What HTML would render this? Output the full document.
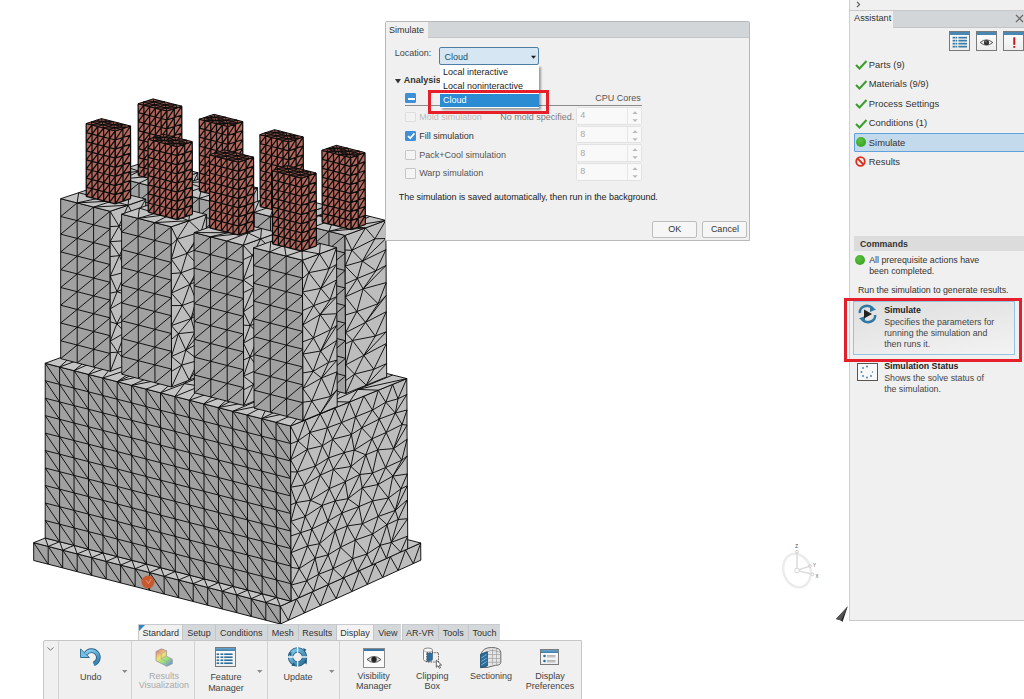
<!DOCTYPE html><html><head><meta charset="utf-8"><style>html,body{margin:0;padding:0;background:#fff;width:1024px;height:699px;overflow:hidden;position:relative;font-family:"Liberation Sans",sans-serif}
#model{position:absolute;left:0;top:0}
.t{position:absolute;font-size:9px;line-height:11px;white-space:nowrap}
.b{font-weight:bold}
#dlg{position:absolute;left:385px;top:21px;width:363.2px;height:218px;background:#f0f0f0;border:1px solid #b8b8b8;border-radius:2px 2px 0 0}
#dlg .tabbar{position:absolute;left:0;top:0;width:363.2px;height:15.2px;background:#d3d6d9;border-bottom:1px solid #c3c6c9}
#dlg .tab{position:absolute;left:0;top:0;width:42px;height:16.2px;background:#f0f0f0;font-size:9px;line-height:17px;color:#333;padding-left:3px;box-sizing:border-box}
#combo{position:absolute;left:53.3px;top:25.2px;width:98px;height:15.8px;background:#d6e6f2;border:1px solid #4f7ea3;border-radius:2px}
.cb{position:absolute;box-sizing:border-box;width:10.5px;height:10.3px;border:1px solid #c6c6c6;background:#f4f4f4;border-radius:1px}
.cb.on{background:#3d8fd6;border-color:#3d8fd6}
.cb.dis{border-color:#dedede;background:#f2f2f2}
.spin{position:absolute;left:190.3px;width:63.8px;height:15.8px;background:#f9f9f9;border:1px solid #e2e2e2;border-radius:1.5px}
.spin span{position:absolute;left:3px;top:2.4px;font-size:9px;line-height:11px;color:#a8a8a8}
.spin:after{content:"";position:absolute;left:50.2px;top:0;width:1px;height:15.8px;background:#e6e6e6}
.btn{position:absolute;top:198.6px;width:43px;height:15.5px;border:1px solid #bdbdbd;background:#f6f6f6;border-radius:2px;font-size:9px;line-height:15px;text-align:center;color:#333}
#dlist{position:absolute;left:439.7px;top:64.7px;width:99.5px;height:43.3px;background:#fff;box-shadow:1.5px 1.5px 2px rgba(0,0,0,0.35)}
#dsel{position:absolute;left:0.3px;top:29.2px;width:99.2px;height:13.5px;background:#2b8bd3}
.redbox{position:absolute;box-sizing:border-box;border:3.9px solid #e5202b}
#panel{position:absolute;left:849px;top:0;width:175px;height:621px;background:#f0f0f0;border-left:1px solid #cfcfcf;border-bottom:1px solid #c8c8c8;box-sizing:border-box}
.aic{position:absolute;top:31.1px;width:19px;height:17.7px;border:1px solid #7a7a7a;background:linear-gradient(#fff,#ececec)}
.aic:before{content:"";position:absolute;left:0;top:0;width:19px;height:2.6px;background:#4a88b2}
.chk{position:absolute;left:4.5px;width:13px;height:10px}
.pt{left:18.8px;font-size:9.4px;color:#333}
#rtabs{position:absolute;left:0;top:623.8px;width:1024px;height:17px}
.rt{position:absolute;top:0;height:17px;background:#d5d8db;border-left:1px solid #c3c6c9;box-sizing:border-box;font-size:9px;line-height:17px;text-align:center;color:#333;border-top:1px solid #c8cbce}
.rt.act{background:#f0f0f0;border-left:1px solid #c8c8c8}
.rt.act2{background:#f3f3f3}
#rbody{position:absolute;left:43px;top:639.5px;width:538.7px;height:70px;background:#f0f0f0;border:1px solid #c6c6c6;border-radius:2px 0 0 0;box-sizing:border-box}
.rsep{position:absolute;top:-1px;width:1px;height:62px;background:#d2d2d2}
.rl{position:absolute;font-size:9px;line-height:11px;white-space:nowrap;transform:translateX(-50%);color:#444}
.rl.g{color:#a9a9a9}
.rarr{position:absolute;top:28px;width:6px;height:4px}
</style></head><body><svg id="model" width="1024" height="699" viewBox="0 0 1024 699"><path d="M33.7 542.7L280.3 606.2L280.4 624.0L33.7 560.5Z" fill="#a1a1a1"/><path d="M33.7 542.7 L33.7 560.5M48.2 546.4 L48.2 564.2M62.7 550.2 L62.7 567.9M77.2 553.9 L77.2 571.7M91.7 557.6 L91.7 575.4M106.2 561.4 L106.2 579.1M120.6 565.1 L120.7 582.9M135.1 568.8 L135.2 586.6M149.6 572.5 L149.7 590.3M164.1 576.3 L164.2 594.1M178.6 580.0 L178.7 597.8M193.2 583.7 L193.2 601.5M207.7 587.5 L207.7 605.3M222.2 591.2 L222.2 609.0M236.7 594.9 L236.8 612.7M251.2 598.7 L251.3 616.5M265.8 602.4 L265.8 620.2M280.3 606.2 L280.4 624.0M33.7 542.7 L48.2 546.4 L62.7 550.2 L77.2 553.9 L91.7 557.6 L106.2 561.4 L120.6 565.1 L135.1 568.8 L149.6 572.5 L164.1 576.3 L178.6 580.0 L193.2 583.7 L207.7 587.5 L222.2 591.2 L236.7 594.9 L251.2 598.7 L265.8 602.4 L280.3 606.2M33.7 560.5 L48.2 564.2 L62.7 567.9 L77.2 571.7 L91.7 575.4 L106.2 579.1 L120.7 582.9 L135.2 586.6 L149.7 590.3 L164.2 594.1 L178.7 597.8 L193.2 601.5 L207.7 605.3 L222.2 609.0 L236.8 612.7 L251.3 616.5 L265.8 620.2 L280.4 624.0M33.7 542.7L48.2 564.2M48.2 546.4L62.7 567.9M62.7 550.2L77.2 571.7M77.2 553.9L91.7 575.4M91.7 557.6L106.2 579.1M106.2 561.4L120.7 582.9M120.6 565.1L135.2 586.6M135.1 568.8L149.7 590.3M149.6 572.5L164.2 594.1M164.1 576.3L178.7 597.8M178.6 580.0L193.2 601.5M193.2 583.7L207.7 605.3M207.7 587.5L222.2 609.0M222.2 591.2L236.8 612.7M236.7 594.9L251.3 616.5M251.2 598.7L265.8 620.2M265.8 602.4L280.4 624.0" fill="none" stroke="#0c0c0c" stroke-width="0.95" stroke-linejoin="round"/><path d="M280.3 606.2L420.7 543.0L420.8 560.2L280.4 624.0Z" fill="#bdbdbd"/><path d="M280.3 606.2 L296.4 598.9 L312.3 591.8 L328.2 584.6 L343.9 577.6 L359.5 570.6 L375.0 563.6 L390.3 556.7 L405.6 549.8 L420.7 543.0M280.4 624.0 L288.4 620.3 L304.4 613.0 L320.3 605.8 L336.1 598.7 L351.8 591.6 L367.3 584.5 L382.7 577.5 L398.1 570.5 L413.3 563.6 L420.8 560.2M280.3 606.2L280.4 624.0M280.3 606.2L288.4 620.3M296.4 598.9L288.4 620.3M296.4 598.9L304.4 613.0M312.3 591.8L304.4 613.0M312.3 591.8L320.3 605.8M328.2 584.6L320.3 605.8M328.2 584.6L336.1 598.7M343.9 577.6L336.1 598.7M343.9 577.6L351.8 591.6M359.5 570.6L351.8 591.6M359.5 570.6L367.3 584.5M375.0 563.6L367.3 584.5M375.0 563.6L382.7 577.5M390.3 556.7L382.7 577.5M390.3 556.7L398.1 570.5M405.6 549.8L398.1 570.5M405.6 549.8L413.3 563.6M420.7 543.0L413.3 563.6M420.7 543.0L420.8 560.2" fill="none" stroke="#0c0c0c" stroke-width="0.95" stroke-linejoin="round"/><path d="M33.7 542.7L280.3 606.2L291.2 601.3L45.2 538.0Z" fill="#c4c4c4"/><path d="M33.7 542.7 L45.2 538.0M48.2 546.4 L59.7 541.7M62.7 550.2 L74.1 545.4M77.2 553.9 L88.5 549.2M91.7 557.6 L103.0 552.9M106.2 561.4 L117.4 556.6M120.6 565.1 L131.9 560.3M135.1 568.8 L146.4 564.0M149.6 572.5 L160.8 567.7M164.1 576.3 L175.3 571.5M178.6 580.0 L189.8 575.2M193.2 583.7 L204.2 578.9M207.7 587.5 L218.7 582.6M222.2 591.2 L233.2 586.4M236.7 594.9 L247.7 590.1M251.2 598.7 L262.2 593.8M265.8 602.4 L276.7 597.5M280.3 606.2 L291.2 601.3M33.7 542.7 L48.2 546.4 L62.7 550.2 L77.2 553.9 L91.7 557.6 L106.2 561.4 L120.6 565.1 L135.1 568.8 L149.6 572.5 L164.1 576.3 L178.6 580.0 L193.2 583.7 L207.7 587.5 L222.2 591.2 L236.7 594.9 L251.2 598.7 L265.8 602.4 L280.3 606.2M45.2 538.0 L59.7 541.7 L74.1 545.4 L88.5 549.2 L103.0 552.9 L117.4 556.6 L131.9 560.3 L146.4 564.0 L160.8 567.7 L175.3 571.5 L189.8 575.2 L204.2 578.9 L218.7 582.6 L233.2 586.4 L247.7 590.1 L262.2 593.8 L276.7 597.5 L291.2 601.3M45.2 538.0L48.2 546.4M59.7 541.7L62.7 550.2M74.1 545.4L77.2 553.9M88.5 549.2L91.7 557.6M103.0 552.9L106.2 561.4M117.4 556.6L120.6 565.1M131.9 560.3L135.1 568.8M146.4 564.0L149.6 572.5M160.8 567.7L164.1 576.3M175.3 571.5L178.6 580.0M189.8 575.2L193.2 583.7M204.2 578.9L207.7 587.5M218.7 582.6L222.2 591.2M233.2 586.4L236.7 594.9M247.7 590.1L251.2 598.7M262.2 593.8L265.8 602.4M276.7 597.5L280.3 606.2" fill="none" stroke="#0c0c0c" stroke-width="0.95" stroke-linejoin="round"/><path d="M335.8 530.4L407.7 548.9L420.7 543.0L349.0 524.6Z" fill="#c4c4c4"/><path d="M335.8 530.4 L349.0 524.6M350.2 534.1 L363.4 528.3M364.6 537.8 L377.7 532.0M379.0 541.5 L392.0 535.7M393.3 545.2 L406.4 539.3M407.7 548.9 L420.7 543.0M335.8 530.4 L350.2 534.1 L364.6 537.8 L379.0 541.5 L393.3 545.2 L407.7 548.9M349.0 524.6 L363.4 528.3 L377.7 532.0 L392.0 535.7 L406.4 539.3 L420.7 543.0M349.0 524.6L350.2 534.1M363.4 528.3L364.6 537.8M377.7 532.0L379.0 541.5M392.0 535.7L393.3 545.2M406.4 539.3L407.7 548.9" fill="none" stroke="#0c0c0c" stroke-width="0.95" stroke-linejoin="round"/><path d="M45.2 363.3L290.5 426.0L291.2 601.3L45.2 538.0Z" fill="#a1a1a1"/><path d="M45.2 363.3 L45.2 380.7 L45.2 398.2 L45.2 415.6 L45.2 433.1 L45.2 450.5 L45.2 468.0 L45.2 485.5 L45.2 503.0 L45.2 520.5 L45.2 538.0M59.6 367.0 L59.6 384.4 L59.6 401.9 L59.6 419.3 L59.6 436.8 L59.6 454.2 L59.6 471.7 L59.6 489.2 L59.6 506.7 L59.6 524.2 L59.7 541.7M74.0 370.7 L74.0 388.1 L74.0 405.6 L74.0 423.0 L74.0 440.5 L74.0 457.9 L74.0 475.4 L74.1 492.9 L74.1 510.4 L74.1 527.9 L74.1 545.4M88.4 374.4 L88.4 391.8 L88.4 409.2 L88.4 426.7 L88.5 444.2 L88.5 461.6 L88.5 479.1 L88.5 496.6 L88.5 514.1 L88.5 531.6 L88.5 549.2M102.8 378.0 L102.8 395.5 L102.8 412.9 L102.9 430.4 L102.9 447.9 L102.9 465.3 L102.9 482.8 L102.9 500.3 L103.0 517.8 L103.0 535.3 L103.0 552.9M117.2 381.7 L117.2 399.2 L117.3 416.6 L117.3 434.1 L117.3 451.6 L117.3 469.0 L117.4 486.5 L117.4 504.0 L117.4 521.5 L117.4 539.1 L117.4 556.6M131.6 385.4 L131.7 402.9 L131.7 420.3 L131.7 437.8 L131.7 455.3 L131.8 472.8 L131.8 490.2 L131.8 507.7 L131.8 525.3 L131.9 542.8 L131.9 560.3M146.1 389.1 L146.1 406.6 L146.1 424.0 L146.2 441.5 L146.2 459.0 L146.2 476.5 L146.2 494.0 L146.3 511.5 L146.3 529.0 L146.3 546.5 L146.4 564.0M160.5 392.8 L160.5 410.3 L160.6 427.7 L160.6 445.2 L160.6 462.7 L160.7 480.2 L160.7 497.7 L160.7 515.2 L160.8 532.7 L160.8 550.2 L160.8 567.7M174.9 396.5 L175.0 413.9 L175.0 431.4 L175.0 448.9 L175.1 466.4 L175.1 483.9 L175.1 501.4 L175.2 518.9 L175.2 536.4 L175.3 553.9 L175.3 571.5M189.4 400.2 L189.4 417.6 L189.4 435.1 L189.5 452.6 L189.5 470.1 L189.6 487.6 L189.6 505.1 L189.6 522.6 L189.7 540.1 L189.7 557.7 L189.8 575.2M203.8 403.9 L203.8 421.3 L203.9 438.8 L203.9 456.3 L204.0 473.8 L204.0 491.3 L204.1 508.8 L204.1 526.3 L204.1 543.8 L204.2 561.4 L204.2 578.9M218.2 407.6 L218.3 425.0 L218.3 442.5 L218.4 460.0 L218.4 477.5 L218.5 495.0 L218.5 512.5 L218.6 530.0 L218.6 547.6 L218.7 565.1 L218.7 582.6M232.7 411.3 L232.7 428.7 L232.8 446.2 L232.8 463.7 L232.9 481.2 L232.9 498.7 L233.0 516.2 L233.0 533.7 L233.1 551.3 L233.1 568.8 L233.2 586.4M247.1 415.0 L247.2 432.4 L247.2 449.9 L247.3 467.4 L247.3 484.9 L247.4 502.4 L247.5 519.9 L247.5 537.5 L247.6 555.0 L247.6 572.5 L247.7 590.1M261.6 418.6 L261.6 436.1 L261.7 453.6 L261.7 471.1 L261.8 488.6 L261.9 506.1 L261.9 523.6 L262.0 541.2 L262.0 558.7 L262.1 576.3 L262.2 593.8M276.0 422.3 L276.1 439.8 L276.2 457.3 L276.2 474.8 L276.3 492.3 L276.3 509.8 L276.4 527.4 L276.5 544.9 L276.5 562.4 L276.6 580.0 L276.7 597.5M290.5 426.0 L290.5 443.5 L290.6 461.0 L290.7 478.5 L290.8 496.0 L290.8 513.5 L290.9 531.1 L291.0 548.6 L291.0 566.2 L291.1 583.7 L291.2 601.3M45.2 363.3 L59.6 367.0 L74.0 370.7 L88.4 374.4 L102.8 378.0 L117.2 381.7 L131.6 385.4 L146.1 389.1 L160.5 392.8 L174.9 396.5 L189.4 400.2 L203.8 403.9 L218.2 407.6 L232.7 411.3 L247.1 415.0 L261.6 418.6 L276.0 422.3 L290.5 426.0M45.2 380.7 L59.6 384.4 L74.0 388.1 L88.4 391.8 L102.8 395.5 L117.2 399.2 L131.7 402.9 L146.1 406.6 L160.5 410.3 L175.0 413.9 L189.4 417.6 L203.8 421.3 L218.3 425.0 L232.7 428.7 L247.2 432.4 L261.6 436.1 L276.1 439.8 L290.5 443.5M45.2 398.2 L59.6 401.9 L74.0 405.6 L88.4 409.2 L102.8 412.9 L117.3 416.6 L131.7 420.3 L146.1 424.0 L160.6 427.7 L175.0 431.4 L189.4 435.1 L203.9 438.8 L218.3 442.5 L232.8 446.2 L247.2 449.9 L261.7 453.6 L276.2 457.3 L290.6 461.0M45.2 415.6 L59.6 419.3 L74.0 423.0 L88.4 426.7 L102.9 430.4 L117.3 434.1 L131.7 437.8 L146.2 441.5 L160.6 445.2 L175.0 448.9 L189.5 452.6 L203.9 456.3 L218.4 460.0 L232.8 463.7 L247.3 467.4 L261.7 471.1 L276.2 474.8 L290.7 478.5M45.2 433.1 L59.6 436.8 L74.0 440.5 L88.5 444.2 L102.9 447.9 L117.3 451.6 L131.7 455.3 L146.2 459.0 L160.6 462.7 L175.1 466.4 L189.5 470.1 L204.0 473.8 L218.4 477.5 L232.9 481.2 L247.3 484.9 L261.8 488.6 L276.3 492.3 L290.8 496.0M45.2 450.5 L59.6 454.2 L74.0 457.9 L88.5 461.6 L102.9 465.3 L117.3 469.0 L131.8 472.8 L146.2 476.5 L160.7 480.2 L175.1 483.9 L189.6 487.6 L204.0 491.3 L218.5 495.0 L232.9 498.7 L247.4 502.4 L261.9 506.1 L276.3 509.8 L290.8 513.5M45.2 468.0 L59.6 471.7 L74.0 475.4 L88.5 479.1 L102.9 482.8 L117.4 486.5 L131.8 490.2 L146.2 494.0 L160.7 497.7 L175.1 501.4 L189.6 505.1 L204.1 508.8 L218.5 512.5 L233.0 516.2 L247.5 519.9 L261.9 523.6 L276.4 527.4 L290.9 531.1M45.2 485.5 L59.6 489.2 L74.1 492.9 L88.5 496.6 L102.9 500.3 L117.4 504.0 L131.8 507.7 L146.3 511.5 L160.7 515.2 L175.2 518.9 L189.6 522.6 L204.1 526.3 L218.6 530.0 L233.0 533.7 L247.5 537.5 L262.0 541.2 L276.5 544.9 L291.0 548.6M45.2 503.0 L59.6 506.7 L74.1 510.4 L88.5 514.1 L103.0 517.8 L117.4 521.5 L131.8 525.3 L146.3 529.0 L160.8 532.7 L175.2 536.4 L189.7 540.1 L204.1 543.8 L218.6 547.6 L233.1 551.3 L247.6 555.0 L262.0 558.7 L276.5 562.4 L291.0 566.2M45.2 520.5 L59.6 524.2 L74.1 527.9 L88.5 531.6 L103.0 535.3 L117.4 539.1 L131.9 542.8 L146.3 546.5 L160.8 550.2 L175.3 553.9 L189.7 557.7 L204.2 561.4 L218.7 565.1 L233.1 568.8 L247.6 572.5 L262.1 576.3 L276.6 580.0 L291.1 583.7M45.2 538.0 L59.7 541.7 L74.1 545.4 L88.5 549.2 L103.0 552.9 L117.4 556.6 L131.9 560.3 L146.4 564.0 L160.8 567.7 L175.3 571.5 L189.8 575.2 L204.2 578.9 L218.7 582.6 L233.2 586.4 L247.7 590.1 L262.2 593.8 L276.7 597.5 L291.2 601.3M45.2 363.3L59.6 384.4M45.2 380.7L59.6 401.9M45.2 398.2L59.6 419.3M45.2 415.6L59.6 436.8M45.2 433.1L59.6 454.2M45.2 450.5L59.6 471.7M45.2 468.0L59.6 489.2M45.2 485.5L59.6 506.7M45.2 503.0L59.6 524.2M45.2 520.5L59.7 541.7M59.6 367.0L74.0 388.1M59.6 384.4L74.0 405.6M59.6 401.9L74.0 423.0M59.6 419.3L74.0 440.5M59.6 436.8L74.0 457.9M59.6 454.2L74.0 475.4M59.6 471.7L74.1 492.9M59.6 489.2L74.1 510.4M59.6 506.7L74.1 527.9M59.6 524.2L74.1 545.4M74.0 370.7L88.4 391.8M74.0 388.1L88.4 409.2M74.0 405.6L88.4 426.7M74.0 423.0L88.5 444.2M74.0 440.5L88.5 461.6M74.0 457.9L88.5 479.1M74.0 475.4L88.5 496.6M74.1 492.9L88.5 514.1M74.1 510.4L88.5 531.6M74.1 527.9L88.5 549.2M88.4 374.4L102.8 395.5M88.4 391.8L102.8 412.9M88.4 409.2L102.9 430.4M88.4 426.7L102.9 447.9M88.5 444.2L102.9 465.3M88.5 461.6L102.9 482.8M88.5 479.1L102.9 500.3M88.5 496.6L103.0 517.8M88.5 514.1L103.0 535.3M88.5 531.6L103.0 552.9M102.8 378.0L117.2 399.2M102.8 395.5L117.3 416.6M102.8 412.9L117.3 434.1M102.9 430.4L117.3 451.6M102.9 447.9L117.3 469.0M102.9 465.3L117.4 486.5M102.9 482.8L117.4 504.0M102.9 500.3L117.4 521.5M103.0 517.8L117.4 539.1M103.0 535.3L117.4 556.6M117.2 381.7L131.7 402.9M117.2 399.2L131.7 420.3M117.3 416.6L131.7 437.8M117.3 434.1L131.7 455.3M117.3 451.6L131.8 472.8M117.3 469.0L131.8 490.2M117.4 486.5L131.8 507.7M117.4 504.0L131.8 525.3M117.4 521.5L131.9 542.8M117.4 539.1L131.9 560.3M131.6 385.4L146.1 406.6M131.7 402.9L146.1 424.0M131.7 420.3L146.2 441.5M131.7 437.8L146.2 459.0M131.7 455.3L146.2 476.5M131.8 472.8L146.2 494.0M131.8 490.2L146.3 511.5M131.8 507.7L146.3 529.0M131.8 525.3L146.3 546.5M131.9 542.8L146.4 564.0M146.1 389.1L160.5 410.3M146.1 406.6L160.6 427.7M146.1 424.0L160.6 445.2M146.2 441.5L160.6 462.7M146.2 459.0L160.7 480.2M146.2 476.5L160.7 497.7M146.2 494.0L160.7 515.2M146.3 511.5L160.8 532.7M146.3 529.0L160.8 550.2M146.3 546.5L160.8 567.7M160.5 392.8L175.0 413.9M160.5 410.3L175.0 431.4M160.6 427.7L175.0 448.9M160.6 445.2L175.1 466.4M160.6 462.7L175.1 483.9M160.7 480.2L175.1 501.4M160.7 497.7L175.2 518.9M160.7 515.2L175.2 536.4M160.8 532.7L175.3 553.9M160.8 550.2L175.3 571.5M174.9 396.5L189.4 417.6M175.0 413.9L189.4 435.1M175.0 431.4L189.5 452.6M175.0 448.9L189.5 470.1M175.1 466.4L189.6 487.6M175.1 483.9L189.6 505.1M175.1 501.4L189.6 522.6M175.2 518.9L189.7 540.1M175.2 536.4L189.7 557.7M175.3 553.9L189.8 575.2M189.4 400.2L203.8 421.3M189.4 417.6L203.9 438.8M189.4 435.1L203.9 456.3M189.5 452.6L204.0 473.8M189.5 470.1L204.0 491.3M189.6 487.6L204.1 508.8M189.6 505.1L204.1 526.3M189.6 522.6L204.1 543.8M189.7 540.1L204.2 561.4M189.7 557.7L204.2 578.9M203.8 403.9L218.3 425.0M203.8 421.3L218.3 442.5M203.9 438.8L218.4 460.0M203.9 456.3L218.4 477.5M204.0 473.8L218.5 495.0M204.0 491.3L218.5 512.5M204.1 508.8L218.6 530.0M204.1 526.3L218.6 547.6M204.1 543.8L218.7 565.1M204.2 561.4L218.7 582.6M218.2 407.6L232.7 428.7M218.3 425.0L232.8 446.2M218.3 442.5L232.8 463.7M218.4 460.0L232.9 481.2M218.4 477.5L232.9 498.7M218.5 495.0L233.0 516.2M218.5 512.5L233.0 533.7M218.6 530.0L233.1 551.3M218.6 547.6L233.1 568.8M218.7 565.1L233.2 586.4M232.7 411.3L247.2 432.4M232.7 428.7L247.2 449.9M232.8 446.2L247.3 467.4M232.8 463.7L247.3 484.9M232.9 481.2L247.4 502.4M232.9 498.7L247.5 519.9M233.0 516.2L247.5 537.5M233.0 533.7L247.6 555.0M233.1 551.3L247.6 572.5M233.1 568.8L247.7 590.1M247.1 415.0L261.6 436.1M247.2 432.4L261.7 453.6M247.2 449.9L261.7 471.1M247.3 467.4L261.8 488.6M247.3 484.9L261.9 506.1M247.4 502.4L261.9 523.6M247.5 519.9L262.0 541.2M247.5 537.5L262.0 558.7M247.6 555.0L262.1 576.3M247.6 572.5L262.2 593.8M261.6 418.6L276.1 439.8M261.6 436.1L276.2 457.3M261.7 453.6L276.2 474.8M261.7 471.1L276.3 492.3M261.8 488.6L276.3 509.8M261.9 506.1L276.4 527.4M261.9 523.6L276.5 544.9M262.0 541.2L276.5 562.4M262.0 558.7L276.6 580.0M262.1 576.3L276.7 597.5M276.0 422.3L290.5 443.5M276.1 439.8L290.6 461.0M276.2 457.3L290.7 478.5M276.2 474.8L290.8 496.0M276.3 492.3L290.8 513.5M276.3 509.8L290.9 531.1M276.4 527.4L291.0 548.6M276.5 544.9L291.0 566.2M276.5 562.4L291.1 583.7M276.6 580.0L291.2 601.3" fill="none" stroke="#0c0c0c" stroke-width="0.95" stroke-linejoin="round"/><path d="M290.5 426.0L406.8 378.6L407.7 548.9L291.2 601.3Z" fill="#bdbdbd"/><path d="M290.5 426.0 L305.4 420.0 L320.2 413.9 L334.9 407.9 L349.4 402.0 L363.9 396.1 L378.3 390.2 L392.6 384.4 L406.8 378.6M290.6 443.8 L297.9 440.9 L309.9 432.5 L327.4 427.8 L341.5 422.6 L355.5 416.9 L372.5 410.1 L385.8 402.2 L398.0 398.8 L406.9 394.4M290.6 459.8 L307.3 449.4 L322.3 445.8 L332.6 439.3 L351.4 434.5 L361.7 427.9 L379.2 419.1 L395.3 413.0 L407.0 410.0M290.7 471.8 L297.3 472.0 L315.4 466.1 L328.6 457.9 L344.2 452.6 L354.2 450.1 L372.0 438.8 L386.2 432.5 L402.1 424.5 L407.0 425.1M290.7 487.2 L304.5 484.9 L320.3 475.2 L333.4 469.3 L350.9 466.5 L365.8 454.8 L377.7 449.9 L393.6 448.6 L407.1 439.2M290.8 504.8 L296.0 502.6 L310.5 500.3 L329.3 488.6 L345.3 481.7 L359.8 474.5 L372.5 473.1 L385.6 467.5 L401.8 460.2 L407.2 456.0M290.8 521.3 L305.2 516.6 L322.0 505.5 L335.2 500.9 L348.0 498.7 L362.2 487.8 L378.0 484.5 L392.8 476.1 L407.3 474.0M290.9 535.9 L300.6 532.7 L311.9 529.1 L327.9 521.2 L341.9 513.0 L359.0 506.6 L372.6 500.9 L388.5 498.0 L400.9 488.9 L407.4 485.7M291.0 552.7 L307.6 546.0 L319.5 543.7 L335.1 530.9 L347.3 525.9 L362.3 523.8 L378.2 516.5 L395.3 510.4 L407.5 499.6M291.0 567.4 L299.2 568.6 L315.1 558.2 L328.1 554.9 L340.5 547.3 L355.3 540.1 L372.5 534.1 L386.9 524.7 L398.2 519.5 L407.6 518.7M291.1 585.1 L306.8 580.8 L318.6 574.3 L333.1 568.7 L352.6 558.6 L367.0 554.0 L380.2 545.3 L391.4 542.4 L407.7 536.1M291.2 601.3 L298.6 597.9 L313.5 591.2 L328.3 584.6 L343.0 578.0 L357.5 571.4 L372.0 564.9 L386.4 558.5 L400.6 552.0 L407.7 548.9M290.5 426.0L290.6 443.8M290.5 426.0L297.9 440.9M305.4 420.0L297.9 440.9M305.4 420.0L309.9 432.5M320.2 413.9L309.9 432.5M320.2 413.9L327.4 427.8M334.9 407.9L327.4 427.8M334.9 407.9L341.5 422.6M349.4 402.0L341.5 422.6M349.4 402.0L355.5 416.9M363.9 396.1L355.5 416.9M363.9 396.1L372.5 410.1M378.3 390.2L372.5 410.1M378.3 390.2L385.8 402.2M392.6 384.4L385.8 402.2M392.6 384.4L398.0 398.8M406.8 378.6L398.0 398.8M406.8 378.6L406.9 394.4M290.6 443.8L290.6 459.8M297.9 440.9L290.6 459.8M297.9 440.9L307.3 449.4M309.9 432.5L307.3 449.4M309.9 432.5L322.3 445.8M327.4 427.8L322.3 445.8M327.4 427.8L332.6 439.3M341.5 422.6L332.6 439.3M341.5 422.6L351.4 434.5M355.5 416.9L351.4 434.5M355.5 416.9L361.7 427.9M372.5 410.1L361.7 427.9M372.5 410.1L379.2 419.1M385.8 402.2L379.2 419.1M385.8 402.2L395.3 413.0M398.0 398.8L395.3 413.0M406.9 394.4L395.3 413.0M406.9 394.4L407.0 410.0M290.6 459.8L290.7 471.8M290.6 459.8L297.3 472.0M307.3 449.4L297.3 472.0M307.3 449.4L315.4 466.1M322.3 445.8L315.4 466.1M322.3 445.8L328.6 457.9M332.6 439.3L328.6 457.9M332.6 439.3L344.2 452.6M351.4 434.5L344.2 452.6M351.4 434.5L354.2 450.1M361.7 427.9L354.2 450.1M361.7 427.9L372.0 438.8M379.2 419.1L372.0 438.8M379.2 419.1L386.2 432.5M395.3 413.0L386.2 432.5M395.3 413.0L402.1 424.5M407.0 410.0L402.1 424.5M407.0 410.0L407.0 425.1M290.7 471.8L290.7 487.2M297.3 472.0L290.7 487.2M297.3 472.0L304.5 484.9M315.4 466.1L304.5 484.9M315.4 466.1L320.3 475.2M328.6 457.9L320.3 475.2M328.6 457.9L333.4 469.3M344.2 452.6L333.4 469.3M344.2 452.6L350.9 466.5M354.2 450.1L350.9 466.5M354.2 450.1L365.8 454.8M372.0 438.8L365.8 454.8M372.0 438.8L377.7 449.9M386.2 432.5L377.7 449.9M386.2 432.5L393.6 448.6M402.1 424.5L393.6 448.6M407.0 425.1L393.6 448.6M407.0 425.1L407.1 439.2M290.7 487.2L290.8 504.8M290.7 487.2L296.0 502.6M304.5 484.9L296.0 502.6M304.5 484.9L310.5 500.3M320.3 475.2L310.5 500.3M320.3 475.2L329.3 488.6M333.4 469.3L329.3 488.6M333.4 469.3L345.3 481.7M350.9 466.5L345.3 481.7M350.9 466.5L359.8 474.5M365.8 454.8L359.8 474.5M365.8 454.8L372.5 473.1M377.7 449.9L372.5 473.1M377.7 449.9L385.6 467.5M393.6 448.6L385.6 467.5M393.6 448.6L401.8 460.2M407.1 439.2L401.8 460.2M407.1 439.2L407.2 456.0M290.8 504.8L290.8 521.3M296.0 502.6L290.8 521.3M296.0 502.6L305.2 516.6M310.5 500.3L305.2 516.6M310.5 500.3L322.0 505.5M329.3 488.6L322.0 505.5M329.3 488.6L335.2 500.9M345.3 481.7L335.2 500.9M345.3 481.7L348.0 498.7M359.8 474.5L348.0 498.7M359.8 474.5L362.2 487.8M372.5 473.1L362.2 487.8M372.5 473.1L378.0 484.5M385.6 467.5L378.0 484.5M385.6 467.5L392.8 476.1M401.8 460.2L392.8 476.1M407.2 456.0L392.8 476.1M407.2 456.0L407.3 474.0M290.8 521.3L290.9 535.9M290.8 521.3L300.6 532.7M305.2 516.6L300.6 532.7M305.2 516.6L311.9 529.1M322.0 505.5L311.9 529.1M322.0 505.5L327.9 521.2M335.2 500.9L327.9 521.2M335.2 500.9L341.9 513.0M348.0 498.7L341.9 513.0M348.0 498.7L359.0 506.6M362.2 487.8L359.0 506.6M362.2 487.8L372.6 500.9M378.0 484.5L372.6 500.9M378.0 484.5L388.5 498.0M392.8 476.1L388.5 498.0M392.8 476.1L400.9 488.9M407.3 474.0L400.9 488.9M407.3 474.0L407.4 485.7M290.9 535.9L291.0 552.7M300.6 532.7L291.0 552.7M300.6 532.7L307.6 546.0M311.9 529.1L307.6 546.0M311.9 529.1L319.5 543.7M327.9 521.2L319.5 543.7M327.9 521.2L335.1 530.9M341.9 513.0L335.1 530.9M341.9 513.0L347.3 525.9M359.0 506.6L347.3 525.9M359.0 506.6L362.3 523.8M372.6 500.9L362.3 523.8M372.6 500.9L378.2 516.5M388.5 498.0L378.2 516.5M388.5 498.0L395.3 510.4M400.9 488.9L395.3 510.4M407.4 485.7L395.3 510.4M407.4 485.7L407.5 499.6M291.0 552.7L291.0 567.4M291.0 552.7L299.2 568.6M307.6 546.0L299.2 568.6M307.6 546.0L315.1 558.2M319.5 543.7L315.1 558.2M319.5 543.7L328.1 554.9M335.1 530.9L328.1 554.9M335.1 530.9L340.5 547.3M347.3 525.9L340.5 547.3M347.3 525.9L355.3 540.1M362.3 523.8L355.3 540.1M362.3 523.8L372.5 534.1M378.2 516.5L372.5 534.1M378.2 516.5L386.9 524.7M395.3 510.4L386.9 524.7M395.3 510.4L398.2 519.5M407.5 499.6L398.2 519.5M407.5 499.6L407.6 518.7M291.0 567.4L291.1 585.1M299.2 568.6L291.1 585.1M299.2 568.6L306.8 580.8M315.1 558.2L306.8 580.8M315.1 558.2L318.6 574.3M328.1 554.9L318.6 574.3M328.1 554.9L333.1 568.7M340.5 547.3L333.1 568.7M340.5 547.3L352.6 558.6M355.3 540.1L352.6 558.6M355.3 540.1L367.0 554.0M372.5 534.1L367.0 554.0M372.5 534.1L380.2 545.3M386.9 524.7L380.2 545.3M386.9 524.7L391.4 542.4M398.2 519.5L391.4 542.4M407.6 518.7L391.4 542.4M407.6 518.7L407.7 536.1M291.1 585.1L291.2 601.3M291.1 585.1L298.6 597.9M306.8 580.8L298.6 597.9M306.8 580.8L313.5 591.2M318.6 574.3L313.5 591.2M318.6 574.3L328.3 584.6M333.1 568.7L328.3 584.6M333.1 568.7L343.0 578.0M352.6 558.6L343.0 578.0M352.6 558.6L357.5 571.4M367.0 554.0L357.5 571.4M367.0 554.0L372.0 564.9M380.2 545.3L372.0 564.9M380.2 545.3L386.4 558.5M391.4 542.4L386.4 558.5M391.4 542.4L400.6 552.0M407.7 536.1L400.6 552.0M407.7 536.1L407.7 548.9" fill="none" stroke="#0c0c0c" stroke-width="0.95" stroke-linejoin="round"/><path d="M168.0 317.7L406.8 378.6L290.5 426.0L45.2 363.3Z" fill="#c4c4c4"/><path d="M168.0 317.7 L137.9 328.8 L107.4 340.2 L76.5 351.7 L45.2 363.3M182.0 321.2 L156.9 329.7 L130.8 341.2 L93.6 354.5 L59.6 367.0M196.0 324.8 L162.3 335.1 L133.1 346.0 L109.0 355.2 L74.0 370.7M210.1 328.4 L173.7 341.7 L151.9 348.3 L112.2 366.0 L88.4 374.4M224.1 332.0 L196.9 342.7 L176.6 352.6 L140.7 365.6 L102.8 378.0M238.1 335.6 L212.3 343.5 L171.1 360.1 L143.8 369.8 L117.2 381.7M252.2 339.1 L226.1 349.9 L201.0 359.0 L164.0 370.6 L131.6 385.4M266.2 342.7 L239.6 354.0 L203.8 365.8 L180.0 375.8 L146.1 389.1M280.2 346.3 L249.9 359.7 L217.7 369.2 L184.4 383.6 L160.5 392.8M294.3 349.9 L270.8 360.3 L246.4 371.2 L200.0 386.2 L174.9 396.5M308.3 353.5 L276.5 364.1 L242.7 376.7 L220.7 389.4 L189.4 400.2M322.4 357.1 L299.8 368.0 L263.9 381.2 L235.5 391.8 L203.8 403.9M336.5 360.6 L302.6 376.0 L275.0 384.9 L241.0 396.1 L218.2 407.6M350.5 364.2 L314.3 379.5 L299.0 386.6 L258.7 400.2 L232.7 411.3M364.6 367.8 L332.4 378.1 L310.6 387.6 L268.5 403.9 L247.1 415.0M378.6 371.4 L351.2 380.4 L313.5 397.1 L288.7 405.3 L261.6 418.6M392.7 375.0 L357.9 389.4 L331.5 401.6 L305.4 409.2 L276.0 422.3M406.8 378.6 L378.3 390.2 L349.4 402.0 L320.2 413.9 L290.5 426.0M168.0 317.7 L182.0 321.2 L196.0 324.8 L210.1 328.4 L224.1 332.0 L238.1 335.6 L252.2 339.1 L266.2 342.7 L280.2 346.3 L294.3 349.9 L308.3 353.5 L322.4 357.1 L336.5 360.6 L350.5 364.2 L364.6 367.8 L378.6 371.4 L392.7 375.0 L406.8 378.6M137.9 328.8 L156.9 329.7 L162.3 335.1 L173.7 341.7 L196.9 342.7 L212.3 343.5 L226.1 349.9 L239.6 354.0 L249.9 359.7 L270.8 360.3 L276.5 364.1 L299.8 368.0 L302.6 376.0 L314.3 379.5 L332.4 378.1 L351.2 380.4 L357.9 389.4 L378.3 390.2M107.4 340.2 L130.8 341.2 L133.1 346.0 L151.9 348.3 L176.6 352.6 L171.1 360.1 L201.0 359.0 L203.8 365.8 L217.7 369.2 L246.4 371.2 L242.7 376.7 L263.9 381.2 L275.0 384.9 L299.0 386.6 L310.6 387.6 L313.5 397.1 L331.5 401.6 L349.4 402.0M76.5 351.7 L93.6 354.5 L109.0 355.2 L112.2 366.0 L140.7 365.6 L143.8 369.8 L164.0 370.6 L180.0 375.8 L184.4 383.6 L200.0 386.2 L220.7 389.4 L235.5 391.8 L241.0 396.1 L258.7 400.2 L268.5 403.9 L288.7 405.3 L305.4 409.2 L320.2 413.9M45.2 363.3 L59.6 367.0 L74.0 370.7 L88.4 374.4 L102.8 378.0 L117.2 381.7 L131.6 385.4 L146.1 389.1 L160.5 392.8 L174.9 396.5 L189.4 400.2 L203.8 403.9 L218.2 407.6 L232.7 411.3 L247.1 415.0 L261.6 418.6 L276.0 422.3 L290.5 426.0M137.9 328.8L182.0 321.2M107.4 340.2L156.9 329.7M107.4 340.2L93.6 354.5M76.5 351.7L59.6 367.0M182.0 321.2L162.3 335.1M156.9 329.7L133.1 346.0M130.8 341.2L109.0 355.2M93.6 354.5L74.0 370.7M196.0 324.8L173.7 341.7M162.3 335.1L151.9 348.3M109.0 355.2L151.9 348.3M109.0 355.2L88.4 374.4M173.7 341.7L224.1 332.0M151.9 348.3L196.9 342.7M151.9 348.3L140.7 365.6M112.2 366.0L102.8 378.0M196.9 342.7L238.1 335.6M176.6 352.6L212.3 343.5M140.7 365.6L171.1 360.1M140.7 365.6L117.2 381.7M238.1 335.6L226.1 349.9M171.1 360.1L226.1 349.9M143.8 369.8L201.0 359.0M117.2 381.7L164.0 370.6M226.1 349.9L266.2 342.7M201.0 359.0L239.6 354.0M201.0 359.0L180.0 375.8M131.6 385.4L180.0 375.8M239.6 354.0L280.2 346.3M239.6 354.0L217.7 369.2M203.8 365.8L184.4 383.6M180.0 375.8L160.5 392.8M280.2 346.3L270.8 360.3M217.7 369.2L270.8 360.3M217.7 369.2L200.0 386.2M184.4 383.6L174.9 396.5M270.8 360.3L308.3 353.5M270.8 360.3L242.7 376.7M246.4 371.2L220.7 389.4M200.0 386.2L189.4 400.2M308.3 353.5L299.8 368.0M276.5 364.1L263.9 381.2M220.7 389.4L263.9 381.2M220.7 389.4L203.8 403.9M322.4 357.1L302.6 376.0M299.8 368.0L275.0 384.9M235.5 391.8L275.0 384.9M235.5 391.8L218.2 407.6M302.6 376.0L350.5 364.2M275.0 384.9L314.3 379.5M241.0 396.1L299.0 386.6M218.2 407.6L258.7 400.2M350.5 364.2L332.4 378.1M314.3 379.5L310.6 387.6M258.7 400.2L310.6 387.6M232.7 411.3L268.5 403.9M332.4 378.1L378.6 371.4M310.6 387.6L351.2 380.4M268.5 403.9L313.5 397.1M268.5 403.9L261.6 418.6M378.6 371.4L357.9 389.4M351.2 380.4L331.5 401.6M288.7 405.3L331.5 401.6M261.6 418.6L305.4 409.2M357.9 389.4L406.8 378.6M357.9 389.4L349.4 402.0M331.5 401.6L320.2 413.9M305.4 409.2L290.5 426.0" fill="none" stroke="#0c0c0c" stroke-width="0.95" stroke-linejoin="round"/><path d="M106.5 174.8L155.3 187.2L155.6 345.0L106.7 332.5Z" fill="#a1a1a1"/><path d="M106.5 174.8 L106.5 192.3 L106.5 209.8 L106.6 227.3 L106.6 244.8 L106.6 262.3 L106.6 279.8 L106.6 297.4 L106.7 314.9 L106.7 332.5M122.7 178.9 L122.8 196.4 L122.8 213.9 L122.8 231.4 L122.8 248.9 L122.9 266.5 L122.9 284.0 L122.9 301.5 L122.9 319.1 L123.0 336.6M139.0 183.1 L139.0 200.6 L139.1 218.1 L139.1 235.6 L139.1 253.1 L139.1 270.6 L139.2 288.1 L139.2 305.7 L139.2 323.2 L139.3 340.8M155.3 187.2 L155.3 204.7 L155.3 222.2 L155.4 239.7 L155.4 257.2 L155.4 274.8 L155.5 292.3 L155.5 309.8 L155.5 327.4 L155.6 345.0M106.5 174.8 L122.7 178.9 L139.0 183.1 L155.3 187.2M106.5 192.3 L122.8 196.4 L139.0 200.6 L155.3 204.7M106.5 209.8 L122.8 213.9 L139.1 218.1 L155.3 222.2M106.6 227.3 L122.8 231.4 L139.1 235.6 L155.4 239.7M106.6 244.8 L122.8 248.9 L139.1 253.1 L155.4 257.2M106.6 262.3 L122.9 266.5 L139.1 270.6 L155.4 274.8M106.6 279.8 L122.9 284.0 L139.2 288.1 L155.5 292.3M106.6 297.4 L122.9 301.5 L139.2 305.7 L155.5 309.8M106.7 314.9 L122.9 319.1 L139.2 323.2 L155.5 327.4M106.7 332.5 L123.0 336.6 L139.3 340.8 L155.6 345.0M106.5 192.3L122.7 178.9M106.5 209.8L122.8 196.4M106.6 227.3L122.8 213.9M106.6 244.8L122.8 231.4M106.6 262.3L122.8 248.9M106.6 279.8L122.9 266.5M106.6 297.4L122.9 284.0M106.7 314.9L122.9 301.5M106.7 332.5L122.9 319.1M122.8 196.4L139.0 183.1M122.8 213.9L139.0 200.6M122.8 231.4L139.1 218.1M122.8 248.9L139.1 235.6M122.9 266.5L139.1 253.1M122.9 284.0L139.1 270.6M122.9 301.5L139.2 288.1M122.9 319.1L139.2 305.7M123.0 336.6L139.2 323.2M139.0 200.6L155.3 187.2M139.1 218.1L155.3 204.7M139.1 235.6L155.3 222.2M139.1 253.1L155.4 239.7M139.1 270.6L155.4 257.2M139.2 288.1L155.4 274.8M139.2 305.7L155.5 292.3M139.2 323.2L155.5 309.8M139.3 340.8L155.5 327.4" fill="none" stroke="#0c0c0c" stroke-width="0.95" stroke-linejoin="round"/><path d="M155.3 187.2L197.9 172.7L198.3 328.9L155.6 345.0Z" fill="#bdbdbd"/><path d="M155.3 187.2 L176.7 179.9 L197.9 172.7M155.3 203.5 L170.0 196.0 L187.1 194.7 L197.9 189.3M155.3 216.9 L174.9 210.1 L198.0 205.1M155.3 232.6 L162.4 234.9 L183.9 222.5 L198.0 221.2M155.4 249.4 L175.3 243.0 L198.0 235.9M155.4 265.4 L165.5 260.5 L184.2 254.5 L198.1 252.7M155.4 282.9 L180.1 273.9 L198.1 265.7M155.5 296.8 L165.4 293.4 L183.4 288.4 L198.1 281.7M155.5 313.6 L172.9 306.0 L198.2 298.9M155.5 326.1 L163.3 326.7 L184.9 315.3 L198.2 310.5M155.6 345.0 L177.0 336.9 L198.3 328.9M155.3 187.2L155.3 203.5M155.3 187.2L170.0 196.0M176.7 179.9L170.0 196.0M176.7 179.9L187.1 194.7M197.9 172.7L187.1 194.7M197.9 172.7L197.9 189.3M155.3 203.5L155.3 216.9M170.0 196.0L155.3 216.9M170.0 196.0L174.9 210.1M187.1 194.7L174.9 210.1M197.9 189.3L174.9 210.1M197.9 189.3L198.0 205.1M155.3 216.9L155.3 232.6M155.3 216.9L162.4 234.9M174.9 210.1L162.4 234.9M174.9 210.1L183.9 222.5M198.0 205.1L183.9 222.5M198.0 205.1L198.0 221.2M155.3 232.6L155.4 249.4M162.4 234.9L155.4 249.4M162.4 234.9L175.3 243.0M183.9 222.5L175.3 243.0M198.0 221.2L175.3 243.0M198.0 221.2L198.0 235.9M155.4 249.4L155.4 265.4M155.4 249.4L165.5 260.5M175.3 243.0L165.5 260.5M175.3 243.0L184.2 254.5M198.0 235.9L184.2 254.5M198.0 235.9L198.1 252.7M155.4 265.4L155.4 282.9M165.5 260.5L155.4 282.9M165.5 260.5L180.1 273.9M184.2 254.5L180.1 273.9M198.1 252.7L180.1 273.9M198.1 252.7L198.1 265.7M155.4 282.9L155.5 296.8M155.4 282.9L165.4 293.4M180.1 273.9L165.4 293.4M180.1 273.9L183.4 288.4M198.1 265.7L183.4 288.4M198.1 265.7L198.1 281.7M155.5 296.8L155.5 313.6M165.4 293.4L155.5 313.6M165.4 293.4L172.9 306.0M183.4 288.4L172.9 306.0M198.1 281.7L172.9 306.0M198.1 281.7L198.2 298.9M155.5 313.6L155.5 326.1M155.5 313.6L163.3 326.7M172.9 306.0L163.3 326.7M172.9 306.0L184.9 315.3M198.2 298.9L184.9 315.3M198.2 298.9L198.2 310.5M155.5 326.1L155.6 345.0M163.3 326.7L155.6 345.0M163.3 326.7L177.0 336.9M184.9 315.3L177.0 336.9M198.2 310.5L177.0 336.9M198.2 310.5L198.3 328.9" fill="none" stroke="#0c0c0c" stroke-width="0.95" stroke-linejoin="round"/><path d="M149.6 160.4L197.9 172.7L155.3 187.2L106.5 174.8Z" fill="#c4c4c4"/><path d="M149.6 160.4 L128.1 167.6 L106.5 174.8M165.7 164.5 L139.4 171.3 L122.7 178.9M181.8 168.6 L154.6 175.9 L139.0 183.1M197.9 172.7 L176.7 179.9 L155.3 187.2M149.6 160.4 L165.7 164.5 L181.8 168.6 L197.9 172.7M128.1 167.6 L139.4 171.3 L154.6 175.9 L176.7 179.9M106.5 174.8 L122.7 178.9 L139.0 183.1 L155.3 187.2M149.6 160.4L139.4 171.3M106.5 174.8L139.4 171.3M139.4 171.3L181.8 168.6M122.7 178.9L154.6 175.9M181.8 168.6L176.7 179.9M154.6 175.9L155.3 187.2" fill="none" stroke="#0c0c0c" stroke-width="0.95" stroke-linejoin="round"/><path d="M166.6 190.1L215.6 202.5L216.0 360.4L166.9 347.9Z" fill="#a1a1a1"/><path d="M166.6 190.1 L166.6 207.6 L166.7 225.1 L166.7 242.6 L166.7 260.1 L166.8 277.7 L166.8 295.2 L166.8 312.7 L166.9 330.3 L166.9 347.9M182.9 194.2 L183.0 211.7 L183.0 229.2 L183.0 246.8 L183.1 264.3 L183.1 281.8 L183.2 299.4 L183.2 316.9 L183.2 334.5 L183.3 352.0M199.2 198.4 L199.3 215.9 L199.3 233.4 L199.4 250.9 L199.4 268.4 L199.5 286.0 L199.5 303.5 L199.6 321.1 L199.6 338.7 L199.6 356.2M215.6 202.5 L215.6 220.0 L215.7 237.6 L215.7 255.1 L215.8 272.6 L215.8 290.2 L215.9 307.7 L215.9 325.3 L216.0 342.8 L216.0 360.4M166.6 190.1 L182.9 194.2 L199.2 198.4 L215.6 202.5M166.6 207.6 L183.0 211.7 L199.3 215.9 L215.6 220.0M166.7 225.1 L183.0 229.2 L199.3 233.4 L215.7 237.6M166.7 242.6 L183.0 246.8 L199.4 250.9 L215.7 255.1M166.7 260.1 L183.1 264.3 L199.4 268.4 L215.8 272.6M166.8 277.7 L183.1 281.8 L199.5 286.0 L215.8 290.2M166.8 295.2 L183.2 299.4 L199.5 303.5 L215.9 307.7M166.8 312.7 L183.2 316.9 L199.6 321.1 L215.9 325.3M166.9 330.3 L183.2 334.5 L199.6 338.7 L216.0 342.8M166.9 347.9 L183.3 352.0 L199.6 356.2 L216.0 360.4M166.6 207.6L182.9 194.2M166.7 225.1L183.0 211.7M166.7 242.6L183.0 229.2M166.7 260.1L183.0 246.8M166.8 277.7L183.1 264.3M166.8 295.2L183.1 281.8M166.8 312.7L183.2 299.4M166.9 330.3L183.2 316.9M166.9 347.9L183.2 334.5M183.0 211.7L199.2 198.4M183.0 229.2L199.3 215.9M183.0 246.8L199.3 233.4M183.1 264.3L199.4 250.9M183.1 281.8L199.4 268.4M183.2 299.4L199.5 286.0M183.2 316.9L199.5 303.5M183.2 334.5L199.6 321.1M183.3 352.0L199.6 338.7M199.3 215.9L215.6 202.5M199.3 233.4L215.6 220.0M199.4 250.9L215.7 237.6M199.4 268.4L215.7 255.1M199.5 286.0L215.8 272.6M199.5 303.5L215.8 290.2M199.6 321.1L215.9 307.7M199.6 338.7L215.9 325.3M199.6 356.2L216.0 342.8" fill="none" stroke="#0c0c0c" stroke-width="0.95" stroke-linejoin="round"/><path d="M215.6 202.5L257.6 187.9L258.2 344.2L216.0 360.4Z" fill="#bdbdbd"/><path d="M215.6 202.5 L236.7 195.2 L257.6 187.9M215.6 220.4 L230.0 211.4 L246.4 207.4 L257.7 204.2M215.7 232.0 L236.1 224.8 L257.7 217.4M215.7 250.9 L225.3 245.8 L245.0 237.9 L257.8 236.0M215.8 268.1 L239.5 256.0 L257.8 249.1M215.8 283.0 L227.0 275.6 L250.6 268.0 L257.9 267.6M215.8 294.7 L236.7 286.9 L257.9 279.8M215.9 311.3 L230.2 310.4 L243.5 299.6 L258.0 298.0M215.9 331.6 L238.7 322.6 L258.1 314.3M216.0 344.5 L229.6 339.3 L249.2 329.4 L258.1 329.9M216.0 360.4 L237.2 352.2 L258.2 344.2M215.6 202.5L215.6 220.4M215.6 202.5L230.0 211.4M236.7 195.2L230.0 211.4M236.7 195.2L246.4 207.4M257.6 187.9L246.4 207.4M257.6 187.9L257.7 204.2M215.6 220.4L215.7 232.0M230.0 211.4L215.7 232.0M230.0 211.4L236.1 224.8M246.4 207.4L236.1 224.8M257.7 204.2L236.1 224.8M257.7 204.2L257.7 217.4M215.7 232.0L215.7 250.9M215.7 232.0L225.3 245.8M236.1 224.8L225.3 245.8M236.1 224.8L245.0 237.9M257.7 217.4L245.0 237.9M257.7 217.4L257.8 236.0M215.7 250.9L215.8 268.1M225.3 245.8L215.8 268.1M225.3 245.8L239.5 256.0M245.0 237.9L239.5 256.0M257.8 236.0L239.5 256.0M257.8 236.0L257.8 249.1M215.8 268.1L215.8 283.0M215.8 268.1L227.0 275.6M239.5 256.0L227.0 275.6M239.5 256.0L250.6 268.0M257.8 249.1L250.6 268.0M257.8 249.1L257.9 267.6M215.8 283.0L215.8 294.7M227.0 275.6L215.8 294.7M227.0 275.6L236.7 286.9M250.6 268.0L236.7 286.9M257.9 267.6L236.7 286.9M257.9 267.6L257.9 279.8M215.8 294.7L215.9 311.3M215.8 294.7L230.2 310.4M236.7 286.9L230.2 310.4M236.7 286.9L243.5 299.6M257.9 279.8L243.5 299.6M257.9 279.8L258.0 298.0M215.9 311.3L215.9 331.6M230.2 310.4L215.9 331.6M230.2 310.4L238.7 322.6M243.5 299.6L238.7 322.6M258.0 298.0L238.7 322.6M258.0 298.0L258.1 314.3M215.9 331.6L216.0 344.5M215.9 331.6L229.6 339.3M238.7 322.6L229.6 339.3M238.7 322.6L249.2 329.4M258.1 314.3L249.2 329.4M258.1 314.3L258.1 329.9M216.0 344.5L216.0 360.4M229.6 339.3L216.0 360.4M229.6 339.3L237.2 352.2M249.2 329.4L237.2 352.2M258.1 329.9L237.2 352.2M258.1 329.9L258.2 344.2" fill="none" stroke="#0c0c0c" stroke-width="0.95" stroke-linejoin="round"/><path d="M209.1 175.5L257.6 187.9L215.6 202.5L166.6 190.1Z" fill="#c4c4c4"/><path d="M209.1 175.5 L187.9 182.8 L166.6 190.1M225.3 179.7 L201.9 187.6 L182.9 194.2M241.4 183.8 L219.1 192.2 L199.2 198.4M257.6 187.9 L236.7 195.2 L215.6 202.5M209.1 175.5 L225.3 179.7 L241.4 183.8 L257.6 187.9M187.9 182.8 L201.9 187.6 L219.1 192.2 L236.7 195.2M166.6 190.1 L182.9 194.2 L199.2 198.4 L215.6 202.5M187.9 182.8L225.3 179.7M187.9 182.8L182.9 194.2M201.9 187.6L241.4 183.8M201.9 187.6L199.2 198.4M219.1 192.2L257.6 187.9M219.1 192.2L215.6 202.5" fill="none" stroke="#0c0c0c" stroke-width="0.95" stroke-linejoin="round"/><path d="M238.1 208.2L286.6 220.6L287.2 378.6L238.5 366.2Z" fill="#a1a1a1"/><path d="M238.1 208.2 L238.1 225.8 L238.2 243.3 L238.2 260.8 L238.3 278.3 L238.3 295.9 L238.4 313.4 L238.4 331.0 L238.5 348.6 L238.5 366.2M254.2 212.4 L254.3 229.9 L254.3 247.4 L254.4 264.9 L254.5 282.5 L254.5 300.0 L254.6 317.6 L254.6 335.1 L254.7 352.7 L254.8 370.3M270.4 216.5 L270.5 234.0 L270.5 251.5 L270.6 269.0 L270.7 286.6 L270.7 304.1 L270.8 321.7 L270.9 339.3 L270.9 356.9 L271.0 374.4M286.6 220.6 L286.7 238.1 L286.7 255.6 L286.8 273.2 L286.9 290.7 L286.9 308.3 L287.0 325.8 L287.1 343.4 L287.1 361.0 L287.2 378.6M238.1 208.2 L254.2 212.4 L270.4 216.5 L286.6 220.6M238.1 225.8 L254.3 229.9 L270.5 234.0 L286.7 238.1M238.2 243.3 L254.3 247.4 L270.5 251.5 L286.7 255.6M238.2 260.8 L254.4 264.9 L270.6 269.0 L286.8 273.2M238.3 278.3 L254.5 282.5 L270.7 286.6 L286.9 290.7M238.3 295.9 L254.5 300.0 L270.7 304.1 L286.9 308.3M238.4 313.4 L254.6 317.6 L270.8 321.7 L287.0 325.8M238.4 331.0 L254.6 335.1 L270.9 339.3 L287.1 343.4M238.5 348.6 L254.7 352.7 L270.9 356.9 L287.1 361.0M238.5 366.2 L254.8 370.3 L271.0 374.4 L287.2 378.6M238.1 225.8L254.2 212.4M238.2 243.3L254.3 229.9M238.2 260.8L254.3 247.4M238.3 278.3L254.4 264.9M238.3 295.9L254.5 282.5M238.4 313.4L254.5 300.0M238.4 331.0L254.6 317.6M238.5 348.6L254.6 335.1M238.5 366.2L254.7 352.7M254.3 229.9L270.4 216.5M254.3 247.4L270.5 234.0M254.4 264.9L270.5 251.5M254.5 282.5L270.6 269.0M254.5 300.0L270.7 286.6M254.6 317.6L270.7 304.1M254.6 335.1L270.8 321.7M254.7 352.7L270.9 339.3M254.8 370.3L270.9 356.9M270.5 234.0L286.6 220.6M270.5 251.5L286.7 238.1M270.6 269.0L286.7 255.6M270.7 286.6L286.8 273.2M270.7 304.1L286.9 290.7M270.8 321.7L286.9 308.3M270.9 339.3L287.0 325.8M270.9 356.9L287.1 343.4M271.0 374.4L287.1 361.0" fill="none" stroke="#0c0c0c" stroke-width="0.95" stroke-linejoin="round"/><path d="M286.6 220.6L328.0 205.7L328.7 362.1L287.2 378.6Z" fill="#bdbdbd"/><path d="M286.6 220.6 L307.4 213.1 L328.0 205.7M286.7 233.7 L296.2 233.4 L318.7 227.3 L328.1 221.5M286.7 254.9 L310.4 242.1 L328.1 236.5M286.8 269.0 L299.8 266.1 L320.4 256.1 L328.2 249.6M286.8 283.2 L309.8 277.4 L328.3 267.9M286.9 297.8 L296.8 294.8 L321.6 284.0 L328.3 284.8M287.0 315.5 L306.3 305.9 L328.4 298.9M287.0 328.9 L296.3 326.5 L321.5 319.3 L328.5 312.1M287.1 344.6 L303.9 342.6 L328.5 329.3M287.2 363.2 L295.2 359.8 L320.1 351.4 L328.6 343.4M287.2 378.6 L308.0 370.3 L328.7 362.1M286.6 220.6L286.7 233.7M286.6 220.6L296.2 233.4M307.4 213.1L296.2 233.4M307.4 213.1L318.7 227.3M328.0 205.7L318.7 227.3M328.0 205.7L328.1 221.5M286.7 233.7L286.7 254.9M296.2 233.4L286.7 254.9M296.2 233.4L310.4 242.1M318.7 227.3L310.4 242.1M328.1 221.5L310.4 242.1M328.1 221.5L328.1 236.5M286.7 254.9L286.8 269.0M286.7 254.9L299.8 266.1M310.4 242.1L299.8 266.1M310.4 242.1L320.4 256.1M328.1 236.5L320.4 256.1M328.1 236.5L328.2 249.6M286.8 269.0L286.8 283.2M299.8 266.1L286.8 283.2M299.8 266.1L309.8 277.4M320.4 256.1L309.8 277.4M328.2 249.6L309.8 277.4M328.2 249.6L328.3 267.9M286.8 283.2L286.9 297.8M286.8 283.2L296.8 294.8M309.8 277.4L296.8 294.8M309.8 277.4L321.6 284.0M328.3 267.9L321.6 284.0M328.3 267.9L328.3 284.8M286.9 297.8L287.0 315.5M296.8 294.8L287.0 315.5M296.8 294.8L306.3 305.9M321.6 284.0L306.3 305.9M328.3 284.8L306.3 305.9M328.3 284.8L328.4 298.9M287.0 315.5L287.0 328.9M287.0 315.5L296.3 326.5M306.3 305.9L296.3 326.5M306.3 305.9L321.5 319.3M328.4 298.9L321.5 319.3M328.4 298.9L328.5 312.1M287.0 328.9L287.1 344.6M296.3 326.5L287.1 344.6M296.3 326.5L303.9 342.6M321.5 319.3L303.9 342.6M328.5 312.1L303.9 342.6M328.5 312.1L328.5 329.3M287.1 344.6L287.2 363.2M287.1 344.6L295.2 359.8M303.9 342.6L295.2 359.8M303.9 342.6L320.1 351.4M328.5 329.3L320.1 351.4M328.5 329.3L328.6 343.4M287.2 363.2L287.2 378.6M295.2 359.8L287.2 378.6M295.2 359.8L308.0 370.3M320.1 351.4L308.0 370.3M328.6 343.4L308.0 370.3M328.6 343.4L328.7 362.1" fill="none" stroke="#0c0c0c" stroke-width="0.95" stroke-linejoin="round"/><path d="M279.9 193.5L328.0 205.7L286.6 220.6L238.1 208.2Z" fill="#c4c4c4"/><path d="M279.9 193.5 L259.1 200.8 L238.1 208.2M295.9 197.6 L274.1 205.4 L254.2 212.4M311.9 201.7 L284.0 210.5 L270.4 216.5M328.0 205.7 L307.4 213.1 L286.6 220.6M279.9 193.5 L295.9 197.6 L311.9 201.7 L328.0 205.7M259.1 200.8 L274.1 205.4 L284.0 210.5 L307.4 213.1M238.1 208.2 L254.2 212.4 L270.4 216.5 L286.6 220.6M259.1 200.8L295.9 197.6M259.1 200.8L254.2 212.4M274.1 205.4L311.9 201.7M274.1 205.4L270.4 216.5M311.9 201.7L307.4 213.1M270.4 216.5L307.4 213.1" fill="none" stroke="#0c0c0c" stroke-width="0.95" stroke-linejoin="round"/><path d="M296.8 223.2L345.0 235.4L345.8 393.5L297.4 381.2Z" fill="#a1a1a1"/><path d="M296.8 223.2 L296.9 240.7 L296.9 258.2 L297.0 275.8 L297.1 293.3 L297.1 310.9 L297.2 328.4 L297.3 346.0 L297.3 363.6 L297.4 381.2M312.9 227.3 L312.9 244.8 L313.0 262.3 L313.1 279.9 L313.2 297.4 L313.2 315.0 L313.3 332.5 L313.4 350.1 L313.5 367.7 L313.5 385.3M328.9 231.3 L329.0 248.9 L329.1 266.4 L329.2 284.0 L329.3 301.5 L329.3 319.1 L329.4 336.6 L329.5 354.2 L329.6 371.8 L329.6 389.4M345.0 235.4 L345.1 253.0 L345.2 270.5 L345.3 288.0 L345.3 305.6 L345.4 323.2 L345.5 340.8 L345.6 358.3 L345.7 375.9 L345.8 393.5M296.8 223.2 L312.9 227.3 L328.9 231.3 L345.0 235.4M296.9 240.7 L312.9 244.8 L329.0 248.9 L345.1 253.0M296.9 258.2 L313.0 262.3 L329.1 266.4 L345.2 270.5M297.0 275.8 L313.1 279.9 L329.2 284.0 L345.3 288.0M297.1 293.3 L313.2 297.4 L329.3 301.5 L345.3 305.6M297.1 310.9 L313.2 315.0 L329.3 319.1 L345.4 323.2M297.2 328.4 L313.3 332.5 L329.4 336.6 L345.5 340.8M297.3 346.0 L313.4 350.1 L329.5 354.2 L345.6 358.3M297.3 363.6 L313.5 367.7 L329.6 371.8 L345.7 375.9M297.4 381.2 L313.5 385.3 L329.6 389.4 L345.8 393.5M296.9 240.7L312.9 227.3M296.9 258.2L312.9 244.8M297.0 275.8L313.0 262.3M297.1 293.3L313.1 279.9M297.1 310.9L313.2 297.4M297.2 328.4L313.2 315.0M297.3 346.0L313.3 332.5M297.3 363.6L313.4 350.1M297.4 381.2L313.5 367.7M312.9 244.8L328.9 231.3M313.0 262.3L329.0 248.9M313.1 279.9L329.1 266.4M313.2 297.4L329.2 284.0M313.2 315.0L329.3 301.5M313.3 332.5L329.3 319.1M313.4 350.1L329.4 336.6M313.5 367.7L329.5 354.2M313.5 385.3L329.6 371.8M329.0 248.9L345.0 235.4M329.1 266.4L345.1 253.0M329.2 284.0L345.2 270.5M329.3 301.5L345.3 288.0M329.3 319.1L345.3 305.6M329.4 336.6L345.4 323.2M329.5 354.2L345.5 340.8M329.6 371.8L345.6 358.3M329.6 389.4L345.7 375.9" fill="none" stroke="#0c0c0c" stroke-width="0.95" stroke-linejoin="round"/><path d="M345.0 235.4L385.8 220.4L386.7 376.9L345.8 393.5Z" fill="#bdbdbd"/><path d="M345.0 235.4 L365.5 227.9 L385.8 220.4M345.1 250.0 L352.0 250.3 L374.9 238.8 L385.9 238.5M345.2 266.0 L362.4 261.1 L386.0 249.6M345.2 284.0 L357.3 278.5 L375.9 270.8 L386.1 265.4M345.3 296.8 L363.1 288.9 L386.2 282.6M345.4 315.0 L356.9 311.5 L378.1 303.7 L386.2 295.5M345.5 332.7 L365.5 322.4 L386.3 311.7M345.5 343.8 L352.5 340.5 L375.3 336.1 L386.4 331.7M345.6 364.9 L363.8 355.4 L386.5 343.4M345.7 380.6 L354.6 374.1 L373.8 369.3 L386.6 363.6M345.8 393.5 L366.3 385.2 L386.7 376.9M345.0 235.4L345.1 250.0M345.0 235.4L352.0 250.3M365.5 227.9L352.0 250.3M365.5 227.9L374.9 238.8M385.8 220.4L374.9 238.8M385.8 220.4L385.9 238.5M345.1 250.0L345.2 266.0M352.0 250.3L345.2 266.0M352.0 250.3L362.4 261.1M374.9 238.8L362.4 261.1M385.9 238.5L362.4 261.1M385.9 238.5L386.0 249.6M345.2 266.0L345.2 284.0M345.2 266.0L357.3 278.5M362.4 261.1L357.3 278.5M362.4 261.1L375.9 270.8M386.0 249.6L375.9 270.8M386.0 249.6L386.1 265.4M345.2 284.0L345.3 296.8M357.3 278.5L345.3 296.8M357.3 278.5L363.1 288.9M375.9 270.8L363.1 288.9M386.1 265.4L363.1 288.9M386.1 265.4L386.2 282.6M345.3 296.8L345.4 315.0M345.3 296.8L356.9 311.5M363.1 288.9L356.9 311.5M363.1 288.9L378.1 303.7M386.2 282.6L378.1 303.7M386.2 282.6L386.2 295.5M345.4 315.0L345.5 332.7M356.9 311.5L345.5 332.7M356.9 311.5L365.5 322.4M378.1 303.7L365.5 322.4M386.2 295.5L365.5 322.4M386.2 295.5L386.3 311.7M345.5 332.7L345.5 343.8M345.5 332.7L352.5 340.5M365.5 322.4L352.5 340.5M365.5 322.4L375.3 336.1M386.3 311.7L375.3 336.1M386.3 311.7L386.4 331.7M345.5 343.8L345.6 364.9M352.5 340.5L345.6 364.9M352.5 340.5L363.8 355.4M375.3 336.1L363.8 355.4M386.4 331.7L363.8 355.4M386.4 331.7L386.5 343.4M345.6 364.9L345.7 380.6M345.6 364.9L354.6 374.1M363.8 355.4L354.6 374.1M363.8 355.4L373.8 369.3M386.5 343.4L373.8 369.3M386.5 343.4L386.6 363.6M345.7 380.6L345.8 393.5M354.6 374.1L345.8 393.5M354.6 374.1L366.3 385.2M373.8 369.3L366.3 385.2M386.6 363.6L366.3 385.2M386.6 363.6L386.7 376.9" fill="none" stroke="#0c0c0c" stroke-width="0.95" stroke-linejoin="round"/><path d="M338.1 208.3L385.8 220.4L345.0 235.4L296.8 223.2Z" fill="#c4c4c4"/><path d="M338.1 208.3 L317.5 215.7 L296.8 223.2M354.0 212.3 L333.8 219.1 L312.9 227.3M369.9 216.4 L348.5 226.6 L328.9 231.3M385.8 220.4 L365.5 227.9 L345.0 235.4M338.1 208.3 L354.0 212.3 L369.9 216.4 L385.8 220.4M317.5 215.7 L333.8 219.1 L348.5 226.6 L365.5 227.9M296.8 223.2 L312.9 227.3 L328.9 231.3 L345.0 235.4M317.5 215.7L354.0 212.3M317.5 215.7L312.9 227.3M354.0 212.3L348.5 226.6M333.8 219.1L328.9 231.3M348.5 226.6L385.8 220.4M328.9 231.3L365.5 227.9" fill="none" stroke="#0c0c0c" stroke-width="0.95" stroke-linejoin="round"/><path d="M138.1 103.7L166.9 111.0L167.0 182.9L138.3 175.6Z" fill="#b0665c"/><path d="M138.1 103.7 L138.2 112.7 L138.2 121.7 L138.2 130.6 L138.2 139.6 L138.2 148.6 L138.2 157.6 L138.2 166.6 L138.3 175.6M143.9 105.2 L143.9 114.1 L143.9 123.1 L143.9 132.1 L143.9 141.1 L144.0 150.1 L144.0 159.1 L144.0 168.0 L144.0 177.0M149.6 106.6 L149.6 115.6 L149.7 124.6 L149.7 133.6 L149.7 142.5 L149.7 151.5 L149.7 160.5 L149.7 169.5 L149.8 178.5M155.4 108.1 L155.4 117.0 L155.4 126.0 L155.4 135.0 L155.4 144.0 L155.5 153.0 L155.5 162.0 L155.5 171.0 L155.5 180.0M161.1 109.5 L161.1 118.5 L161.2 127.5 L161.2 136.5 L161.2 145.5 L161.2 154.4 L161.2 163.4 L161.2 172.4 L161.3 181.4M166.9 111.0 L166.9 120.0 L166.9 128.9 L166.9 137.9 L166.9 146.9 L167.0 155.9 L167.0 164.9 L167.0 173.9 L167.0 182.9M138.1 103.7 L143.9 105.2 L149.6 106.6 L155.4 108.1 L161.1 109.5 L166.9 111.0M138.2 112.7 L143.9 114.1 L149.6 115.6 L155.4 117.0 L161.1 118.5 L166.9 120.0M138.2 121.7 L143.9 123.1 L149.7 124.6 L155.4 126.0 L161.2 127.5 L166.9 128.9M138.2 130.6 L143.9 132.1 L149.7 133.6 L155.4 135.0 L161.2 136.5 L166.9 137.9M138.2 139.6 L143.9 141.1 L149.7 142.5 L155.4 144.0 L161.2 145.5 L166.9 146.9M138.2 148.6 L144.0 150.1 L149.7 151.5 L155.5 153.0 L161.2 154.4 L167.0 155.9M138.2 157.6 L144.0 159.1 L149.7 160.5 L155.5 162.0 L161.2 163.4 L167.0 164.9M138.2 166.6 L144.0 168.0 L149.7 169.5 L155.5 171.0 L161.2 172.4 L167.0 173.9M138.3 175.6 L144.0 177.0 L149.8 178.5 L155.5 180.0 L161.3 181.4 L167.0 182.9M138.2 112.7L143.9 105.2M138.2 121.7L143.9 114.1M138.2 130.6L143.9 123.1M138.2 139.6L143.9 132.1M138.2 148.6L143.9 141.1M138.2 157.6L144.0 150.1M138.2 166.6L144.0 159.1M138.3 175.6L144.0 168.0M143.9 114.1L149.6 106.6M143.9 123.1L149.6 115.6M143.9 132.1L149.7 124.6M143.9 141.1L149.7 133.6M144.0 150.1L149.7 142.5M144.0 159.1L149.7 151.5M144.0 168.0L149.7 160.5M144.0 177.0L149.7 169.5M149.6 115.6L155.4 108.1M149.7 124.6L155.4 117.0M149.7 133.6L155.4 126.0M149.7 142.5L155.4 135.0M149.7 151.5L155.4 144.0M149.7 160.5L155.5 153.0M149.7 169.5L155.5 162.0M149.8 178.5L155.5 171.0M155.4 117.0L161.1 109.5M155.4 126.0L161.1 118.5M155.4 135.0L161.2 127.5M155.4 144.0L161.2 136.5M155.5 153.0L161.2 145.5M155.5 162.0L161.2 154.4M155.5 171.0L161.2 163.4M155.5 180.0L161.2 172.4M161.1 118.5L166.9 111.0M161.2 127.5L166.9 120.0M161.2 136.5L166.9 128.9M161.2 145.5L166.9 137.9M161.2 154.4L166.9 146.9M161.2 163.4L167.0 155.9M161.2 172.4L167.0 164.9M161.3 181.4L167.0 173.9" fill="none" stroke="#0c0c0c" stroke-width="1.25" stroke-linejoin="round"/><path d="M166.9 111.0L181.8 106.2L181.9 177.8L167.0 182.9Z" fill="#b3695e"/><path d="M166.9 111.0 L166.9 120.0 L166.9 128.9 L166.9 137.9 L166.9 146.9 L167.0 155.9 L167.0 164.9 L167.0 173.9 L167.0 182.9M174.3 108.6 L174.3 117.5 L174.4 126.5 L174.4 135.5 L174.4 144.4 L174.4 153.4 L174.4 162.4 L174.5 171.4 L174.5 180.3M181.8 106.2 L181.8 115.1 L181.8 124.1 L181.8 133.0 L181.8 142.0 L181.9 150.9 L181.9 159.9 L181.9 168.8 L181.9 177.8M166.9 111.0 L174.3 108.6 L181.8 106.2M166.9 120.0 L174.3 117.5 L181.8 115.1M166.9 128.9 L174.4 126.5 L181.8 124.1M166.9 137.9 L174.4 135.5 L181.8 133.0M166.9 146.9 L174.4 144.4 L181.8 142.0M167.0 155.9 L174.4 153.4 L181.9 150.9M167.0 164.9 L174.4 162.4 L181.9 159.9M167.0 173.9 L174.5 171.4 L181.9 168.8M167.0 182.9 L174.5 180.3 L181.9 177.8M166.9 120.0L174.3 108.6M166.9 128.9L174.3 117.5M166.9 137.9L174.4 126.5M166.9 146.9L174.4 135.5M167.0 155.9L174.4 144.4M167.0 164.9L174.4 153.4M167.0 173.9L174.4 162.4M167.0 182.9L174.5 171.4M174.3 117.5L181.8 106.2M174.4 126.5L181.8 115.1M174.4 135.5L181.8 124.1M174.4 144.4L181.8 133.0M174.4 153.4L181.8 142.0M174.4 162.4L181.9 150.9M174.5 171.4L181.9 159.9M174.5 180.3L181.9 168.8" fill="none" stroke="#0c0c0c" stroke-width="1.25" stroke-linejoin="round"/><path d="M153.1 98.9L181.8 106.2L166.9 111.0L138.1 103.7Z" fill="#9a584e"/><path d="M153.1 98.9 L148.1 100.5 L143.1 102.1 L138.1 103.7M158.9 100.4 L153.9 101.9 L148.9 103.5 L143.9 105.2M164.6 101.8 L159.6 103.4 L154.6 105.0 L149.6 106.6M170.3 103.3 L165.3 104.9 L160.4 106.5 L155.4 108.1M176.0 104.7 L171.1 106.3 L166.1 107.9 L161.1 109.5M181.8 106.2 L176.8 107.8 L171.8 109.4 L166.9 111.0M153.1 98.9 L158.9 100.4 L164.6 101.8 L170.3 103.3 L176.0 104.7 L181.8 106.2M148.1 100.5 L153.9 101.9 L159.6 103.4 L165.3 104.9 L171.1 106.3 L176.8 107.8M143.1 102.1 L148.9 103.5 L154.6 105.0 L160.4 106.5 L166.1 107.9 L171.8 109.4M138.1 103.7 L143.9 105.2 L149.6 106.6 L155.4 108.1 L161.1 109.5 L166.9 111.0M153.1 98.9L153.9 101.9M143.1 102.1L153.9 101.9M143.1 102.1L143.9 105.2M153.9 101.9L164.6 101.8M153.9 101.9L154.6 105.0M143.9 105.2L154.6 105.0M164.6 101.8L165.3 104.9M154.6 105.0L165.3 104.9M154.6 105.0L155.4 108.1M165.3 104.9L176.0 104.7M165.3 104.9L166.1 107.9M155.4 108.1L166.1 107.9M176.0 104.7L176.8 107.8M166.1 107.9L176.8 107.8M166.1 107.9L166.9 111.0" fill="none" stroke="#0c0c0c" stroke-width="1.0" stroke-linejoin="round"/><path d="M199.2 119.2L228.0 126.5L228.2 198.4L199.4 191.1Z" fill="#b0665c"/><path d="M199.2 119.2 L199.3 128.2 L199.3 137.2 L199.3 146.1 L199.3 155.1 L199.4 164.1 L199.4 173.1 L199.4 182.1 L199.4 191.1M205.0 120.6 L205.0 129.6 L205.0 138.6 L205.1 147.6 L205.1 156.6 L205.1 165.6 L205.1 174.6 L205.2 183.6 L205.2 192.6M210.8 122.1 L210.8 131.1 L210.8 140.1 L210.8 149.1 L210.8 158.1 L210.9 167.0 L210.9 176.0 L210.9 185.0 L210.9 194.0M216.5 123.6 L216.5 132.5 L216.6 141.5 L216.6 150.5 L216.6 159.5 L216.6 168.5 L216.7 177.5 L216.7 186.5 L216.7 195.5M222.3 125.0 L222.3 134.0 L222.3 143.0 L222.3 152.0 L222.4 161.0 L222.4 170.0 L222.4 179.0 L222.4 188.0 L222.5 197.0M228.0 126.5 L228.0 135.5 L228.1 144.4 L228.1 153.4 L228.1 162.4 L228.1 171.4 L228.2 180.4 L228.2 189.4 L228.2 198.4M199.2 119.2 L205.0 120.6 L210.8 122.1 L216.5 123.6 L222.3 125.0 L228.0 126.5M199.3 128.2 L205.0 129.6 L210.8 131.1 L216.5 132.5 L222.3 134.0 L228.0 135.5M199.3 137.2 L205.0 138.6 L210.8 140.1 L216.6 141.5 L222.3 143.0 L228.1 144.4M199.3 146.1 L205.1 147.6 L210.8 149.1 L216.6 150.5 L222.3 152.0 L228.1 153.4M199.3 155.1 L205.1 156.6 L210.8 158.1 L216.6 159.5 L222.4 161.0 L228.1 162.4M199.4 164.1 L205.1 165.6 L210.9 167.0 L216.6 168.5 L222.4 170.0 L228.1 171.4M199.4 173.1 L205.1 174.6 L210.9 176.0 L216.7 177.5 L222.4 179.0 L228.2 180.4M199.4 182.1 L205.2 183.6 L210.9 185.0 L216.7 186.5 L222.4 188.0 L228.2 189.4M199.4 191.1 L205.2 192.6 L210.9 194.0 L216.7 195.5 L222.5 197.0 L228.2 198.4M199.3 128.2L205.0 120.6M199.3 137.2L205.0 129.6M199.3 146.1L205.0 138.6M199.3 155.1L205.1 147.6M199.4 164.1L205.1 156.6M199.4 173.1L205.1 165.6M199.4 182.1L205.1 174.6M199.4 191.1L205.2 183.6M205.0 129.6L210.8 122.1M205.0 138.6L210.8 131.1M205.1 147.6L210.8 140.1M205.1 156.6L210.8 149.1M205.1 165.6L210.8 158.1M205.1 174.6L210.9 167.0M205.2 183.6L210.9 176.0M205.2 192.6L210.9 185.0M210.8 131.1L216.5 123.6M210.8 140.1L216.5 132.5M210.8 149.1L216.6 141.5M210.8 158.1L216.6 150.5M210.9 167.0L216.6 159.5M210.9 176.0L216.6 168.5M210.9 185.0L216.7 177.5M210.9 194.0L216.7 186.5M216.5 132.5L222.3 125.0M216.6 141.5L222.3 134.0M216.6 150.5L222.3 143.0M216.6 159.5L222.3 152.0M216.6 168.5L222.4 161.0M216.7 177.5L222.4 170.0M216.7 186.5L222.4 179.0M216.7 195.5L222.4 188.0M222.3 134.0L228.0 126.5M222.3 143.0L228.0 135.5M222.3 152.0L228.1 144.4M222.4 161.0L228.1 153.4M222.4 170.0L228.1 162.4M222.4 179.0L228.1 171.4M222.4 188.0L228.2 180.4M222.5 197.0L228.2 189.4" fill="none" stroke="#0c0c0c" stroke-width="1.25" stroke-linejoin="round"/><path d="M228.0 126.5L242.7 121.6L242.9 193.3L228.2 198.4Z" fill="#b3695e"/><path d="M228.0 126.5 L228.0 135.5 L228.1 144.4 L228.1 153.4 L228.1 162.4 L228.1 171.4 L228.2 180.4 L228.2 189.4 L228.2 198.4M235.4 124.0 L235.4 133.0 L235.4 142.0 L235.4 150.9 L235.5 159.9 L235.5 168.9 L235.5 177.9 L235.6 186.9 L235.6 195.9M242.7 121.6 L242.7 130.5 L242.8 139.5 L242.8 148.5 L242.8 157.4 L242.8 166.4 L242.9 175.4 L242.9 184.3 L242.9 193.3M228.0 126.5 L235.4 124.0 L242.7 121.6M228.0 135.5 L235.4 133.0 L242.7 130.5M228.1 144.4 L235.4 142.0 L242.8 139.5M228.1 153.4 L235.4 150.9 L242.8 148.5M228.1 162.4 L235.5 159.9 L242.8 157.4M228.1 171.4 L235.5 168.9 L242.8 166.4M228.2 180.4 L235.5 177.9 L242.9 175.4M228.2 189.4 L235.6 186.9 L242.9 184.3M228.2 198.4 L235.6 195.9 L242.9 193.3M228.0 135.5L235.4 124.0M228.1 144.4L235.4 133.0M228.1 153.4L235.4 142.0M228.1 162.4L235.4 150.9M228.1 171.4L235.5 159.9M228.2 180.4L235.5 168.9M228.2 189.4L235.5 177.9M228.2 198.4L235.6 186.9M235.4 133.0L242.7 121.6M235.4 142.0L242.7 130.5M235.4 150.9L242.8 139.5M235.5 159.9L242.8 148.5M235.5 168.9L242.8 157.4M235.5 177.9L242.8 166.4M235.6 186.9L242.9 175.4M235.6 195.9L242.9 184.3" fill="none" stroke="#0c0c0c" stroke-width="1.25" stroke-linejoin="round"/><path d="M214.0 114.3L242.7 121.6L228.0 126.5L199.2 119.2Z" fill="#9a584e"/><path d="M214.0 114.3 L209.1 115.9 L204.2 117.6 L199.2 119.2M219.8 115.8 L214.9 117.4 L209.9 119.0 L205.0 120.6M225.5 117.2 L220.6 118.9 L215.7 120.5 L210.8 122.1M231.2 118.7 L226.3 120.3 L221.4 121.9 L216.5 123.6M237.0 120.1 L232.1 121.8 L227.2 123.4 L222.3 125.0M242.7 121.6 L237.8 123.2 L232.9 124.8 L228.0 126.5M214.0 114.3 L219.8 115.8 L225.5 117.2 L231.2 118.7 L237.0 120.1 L242.7 121.6M209.1 115.9 L214.9 117.4 L220.6 118.9 L226.3 120.3 L232.1 121.8 L237.8 123.2M204.2 117.6 L209.9 119.0 L215.7 120.5 L221.4 121.9 L227.2 123.4 L232.9 124.8M199.2 119.2 L205.0 120.6 L210.8 122.1 L216.5 123.6 L222.3 125.0 L228.0 126.5M214.0 114.3L214.9 117.4M204.2 117.6L214.9 117.4M204.2 117.6L205.0 120.6M214.9 117.4L225.5 117.2M214.9 117.4L215.7 120.5M205.0 120.6L215.7 120.5M225.5 117.2L226.3 120.3M215.7 120.5L226.3 120.3M215.7 120.5L216.5 123.6M226.3 120.3L237.0 120.1M226.3 120.3L227.2 123.4M216.5 123.6L227.2 123.4M237.0 120.1L237.8 123.2M227.2 123.4L237.8 123.2M227.2 123.4L228.0 126.5" fill="none" stroke="#0c0c0c" stroke-width="1.0" stroke-linejoin="round"/><path d="M259.9 134.6L288.7 141.9L289.0 213.9L260.2 206.6Z" fill="#b0665c"/><path d="M259.9 134.6 L260.0 143.6 L260.0 152.5 L260.0 161.5 L260.1 170.5 L260.1 179.5 L260.1 188.5 L260.2 197.5 L260.2 206.6M265.7 136.0 L265.7 145.0 L265.8 154.0 L265.8 163.0 L265.8 172.0 L265.9 181.0 L265.9 190.0 L265.9 199.0 L266.0 208.0M271.5 137.5 L271.5 146.5 L271.5 155.5 L271.6 164.5 L271.6 173.5 L271.6 182.5 L271.7 191.5 L271.7 200.5 L271.7 209.5M277.2 138.9 L277.3 147.9 L277.3 156.9 L277.3 165.9 L277.3 174.9 L277.4 183.9 L277.4 192.9 L277.4 201.9 L277.5 210.9M283.0 140.4 L283.0 149.4 L283.0 158.4 L283.1 167.4 L283.1 176.4 L283.1 185.4 L283.2 194.4 L283.2 203.4 L283.2 212.4M288.7 141.9 L288.8 150.9 L288.8 159.8 L288.8 168.8 L288.9 177.8 L288.9 186.8 L288.9 195.9 L289.0 204.9 L289.0 213.9M259.9 134.6 L265.7 136.0 L271.5 137.5 L277.2 138.9 L283.0 140.4 L288.7 141.9M260.0 143.6 L265.7 145.0 L271.5 146.5 L277.3 147.9 L283.0 149.4 L288.8 150.9M260.0 152.5 L265.8 154.0 L271.5 155.5 L277.3 156.9 L283.0 158.4 L288.8 159.8M260.0 161.5 L265.8 163.0 L271.6 164.5 L277.3 165.9 L283.1 167.4 L288.8 168.8M260.1 170.5 L265.8 172.0 L271.6 173.5 L277.3 174.9 L283.1 176.4 L288.9 177.8M260.1 179.5 L265.9 181.0 L271.6 182.5 L277.4 183.9 L283.1 185.4 L288.9 186.8M260.1 188.5 L265.9 190.0 L271.7 191.5 L277.4 192.9 L283.2 194.4 L288.9 195.9M260.2 197.5 L265.9 199.0 L271.7 200.5 L277.4 201.9 L283.2 203.4 L289.0 204.9M260.2 206.6 L266.0 208.0 L271.7 209.5 L277.5 210.9 L283.2 212.4 L289.0 213.9M260.0 143.6L265.7 136.0M260.0 152.5L265.7 145.0M260.0 161.5L265.8 154.0M260.1 170.5L265.8 163.0M260.1 179.5L265.8 172.0M260.1 188.5L265.9 181.0M260.2 197.5L265.9 190.0M260.2 206.6L265.9 199.0M265.7 145.0L271.5 137.5M265.8 154.0L271.5 146.5M265.8 163.0L271.5 155.5M265.8 172.0L271.6 164.5M265.9 181.0L271.6 173.5M265.9 190.0L271.6 182.5M265.9 199.0L271.7 191.5M266.0 208.0L271.7 200.5M271.5 146.5L277.2 138.9M271.5 155.5L277.3 147.9M271.6 164.5L277.3 156.9M271.6 173.5L277.3 165.9M271.6 182.5L277.3 174.9M271.7 191.5L277.4 183.9M271.7 200.5L277.4 192.9M271.7 209.5L277.4 201.9M277.3 147.9L283.0 140.4M277.3 156.9L283.0 149.4M277.3 165.9L283.0 158.4M277.3 174.9L283.1 167.4M277.4 183.9L283.1 176.4M277.4 192.9L283.1 185.4M277.4 201.9L283.2 194.4M277.5 210.9L283.2 203.4M283.0 149.4L288.7 141.9M283.0 158.4L288.8 150.9M283.1 167.4L288.8 159.8M283.1 176.4L288.8 168.8M283.1 185.4L288.9 177.8M283.2 194.4L288.9 186.8M283.2 203.4L288.9 195.9M283.2 212.4L289.0 204.9" fill="none" stroke="#0c0c0c" stroke-width="1.25" stroke-linejoin="round"/><path d="M288.7 141.9L303.2 136.9L303.5 208.7L289.0 213.9Z" fill="#b3695e"/><path d="M288.7 141.9 L288.8 150.9 L288.8 159.8 L288.8 168.8 L288.9 177.8 L288.9 186.8 L288.9 195.9 L289.0 204.9 L289.0 213.9M296.0 139.4 L296.0 148.4 L296.1 157.3 L296.1 166.3 L296.1 175.3 L296.2 184.3 L296.2 193.3 L296.2 202.3 L296.3 211.3M303.2 136.9 L303.3 145.9 L303.3 154.9 L303.3 163.8 L303.4 172.8 L303.4 181.8 L303.4 190.7 L303.5 199.7 L303.5 208.7M288.7 141.9 L296.0 139.4 L303.2 136.9M288.8 150.9 L296.0 148.4 L303.3 145.9M288.8 159.8 L296.1 157.3 L303.3 154.9M288.8 168.8 L296.1 166.3 L303.3 163.8M288.9 177.8 L296.1 175.3 L303.4 172.8M288.9 186.8 L296.2 184.3 L303.4 181.8M288.9 195.9 L296.2 193.3 L303.4 190.7M289.0 204.9 L296.2 202.3 L303.5 199.7M289.0 213.9 L296.3 211.3 L303.5 208.7M288.8 150.9L296.0 139.4M288.8 159.8L296.0 148.4M288.8 168.8L296.1 157.3M288.9 177.8L296.1 166.3M288.9 186.8L296.1 175.3M288.9 195.9L296.2 184.3M289.0 204.9L296.2 193.3M289.0 213.9L296.2 202.3M296.0 148.4L303.2 136.9M296.1 157.3L303.3 145.9M296.1 166.3L303.3 154.9M296.1 175.3L303.3 163.8M296.2 184.3L303.4 172.8M296.2 193.3L303.4 181.8M296.2 202.3L303.4 190.7M296.3 211.3L303.5 199.7" fill="none" stroke="#0c0c0c" stroke-width="1.25" stroke-linejoin="round"/><path d="M274.5 129.7L303.2 136.9L288.7 141.9L259.9 134.6Z" fill="#9a584e"/><path d="M274.5 129.7 L269.7 131.3 L264.8 132.9 L259.9 134.6M280.3 131.1 L275.4 132.7 L270.6 134.4 L265.7 136.0M286.0 132.6 L281.2 134.2 L276.3 135.8 L271.5 137.5M291.7 134.0 L286.9 135.7 L282.1 137.3 L277.2 138.9M297.5 135.5 L292.7 137.1 L287.8 138.8 L283.0 140.4M303.2 136.9 L298.4 138.6 L293.6 140.2 L288.7 141.9M274.5 129.7 L280.3 131.1 L286.0 132.6 L291.7 134.0 L297.5 135.5 L303.2 136.9M269.7 131.3 L275.4 132.7 L281.2 134.2 L286.9 135.7 L292.7 137.1 L298.4 138.6M264.8 132.9 L270.6 134.4 L276.3 135.8 L282.1 137.3 L287.8 138.8 L293.6 140.2M259.9 134.6 L265.7 136.0 L271.5 137.5 L277.2 138.9 L283.0 140.4 L288.7 141.9M274.5 129.7L275.4 132.7M264.8 132.9L275.4 132.7M264.8 132.9L265.7 136.0M275.4 132.7L286.0 132.6M275.4 132.7L276.3 135.8M265.7 136.0L276.3 135.8M286.0 132.6L286.9 135.7M276.3 135.8L286.9 135.7M276.3 135.8L277.2 138.9M286.9 135.7L297.5 135.5M286.9 135.7L287.8 138.8M277.2 138.9L287.8 138.8M297.5 135.5L298.4 138.6M287.8 138.8L298.4 138.6M287.8 138.8L288.7 141.9" fill="none" stroke="#0c0c0c" stroke-width="1.0" stroke-linejoin="round"/><path d="M321.9 150.3L350.8 157.6L351.1 229.6L322.2 222.3Z" fill="#b0665c"/><path d="M321.9 150.3 L322.0 159.3 L322.0 168.3 L322.1 177.3 L322.1 186.3 L322.1 195.3 L322.2 204.3 L322.2 213.3 L322.2 222.3M327.7 151.7 L327.7 160.7 L327.8 169.7 L327.8 178.7 L327.9 187.7 L327.9 196.7 L327.9 205.8 L328.0 214.8 L328.0 223.8M333.5 153.2 L333.5 162.2 L333.5 171.2 L333.6 180.2 L333.6 189.2 L333.7 198.2 L333.7 207.2 L333.7 216.2 L333.8 225.2M339.2 154.7 L339.3 163.7 L339.3 172.7 L339.3 181.7 L339.4 190.7 L339.4 199.7 L339.5 208.7 L339.5 217.7 L339.6 226.7M345.0 156.1 L345.0 165.1 L345.1 174.1 L345.1 183.1 L345.2 192.1 L345.2 201.1 L345.2 210.1 L345.3 219.2 L345.3 228.2M350.8 157.6 L350.8 166.6 L350.8 175.6 L350.9 184.6 L350.9 193.6 L351.0 202.6 L351.0 211.6 L351.1 220.6 L351.1 229.6M321.9 150.3 L327.7 151.7 L333.5 153.2 L339.2 154.7 L345.0 156.1 L350.8 157.6M322.0 159.3 L327.7 160.7 L333.5 162.2 L339.3 163.7 L345.0 165.1 L350.8 166.6M322.0 168.3 L327.8 169.7 L333.5 171.2 L339.3 172.7 L345.1 174.1 L350.8 175.6M322.1 177.3 L327.8 178.7 L333.6 180.2 L339.3 181.7 L345.1 183.1 L350.9 184.6M322.1 186.3 L327.9 187.7 L333.6 189.2 L339.4 190.7 L345.2 192.1 L350.9 193.6M322.1 195.3 L327.9 196.7 L333.7 198.2 L339.4 199.7 L345.2 201.1 L351.0 202.6M322.2 204.3 L327.9 205.8 L333.7 207.2 L339.5 208.7 L345.2 210.1 L351.0 211.6M322.2 213.3 L328.0 214.8 L333.7 216.2 L339.5 217.7 L345.3 219.2 L351.1 220.6M322.2 222.3 L328.0 223.8 L333.8 225.2 L339.6 226.7 L345.3 228.2 L351.1 229.6M322.0 159.3L327.7 151.7M322.0 168.3L327.7 160.7M322.1 177.3L327.8 169.7M322.1 186.3L327.8 178.7M322.1 195.3L327.9 187.7M322.2 204.3L327.9 196.7M322.2 213.3L327.9 205.8M322.2 222.3L328.0 214.8M327.7 160.7L333.5 153.2M327.8 169.7L333.5 162.2M327.8 178.7L333.5 171.2M327.9 187.7L333.6 180.2M327.9 196.7L333.6 189.2M327.9 205.8L333.7 198.2M328.0 214.8L333.7 207.2M328.0 223.8L333.7 216.2M333.5 162.2L339.2 154.7M333.5 171.2L339.3 163.7M333.6 180.2L339.3 172.7M333.6 189.2L339.3 181.7M333.7 198.2L339.4 190.7M333.7 207.2L339.4 199.7M333.7 216.2L339.5 208.7M333.8 225.2L339.5 217.7M339.3 163.7L345.0 156.1M339.3 172.7L345.0 165.1M339.3 181.7L345.1 174.1M339.4 190.7L345.1 183.1M339.4 199.7L345.2 192.1M339.5 208.7L345.2 201.1M339.5 217.7L345.2 210.1M339.6 226.7L345.3 219.2M345.0 165.1L350.8 157.6M345.1 174.1L350.8 166.6M345.1 183.1L350.8 175.6M345.2 192.1L350.9 184.6M345.2 201.1L350.9 193.6M345.2 210.1L351.0 202.6M345.3 219.2L351.0 211.6M345.3 228.2L351.1 220.6" fill="none" stroke="#0c0c0c" stroke-width="1.25" stroke-linejoin="round"/><path d="M350.8 157.6L365.0 152.6L365.4 224.4L351.1 229.6Z" fill="#b3695e"/><path d="M350.8 157.6 L350.8 166.6 L350.8 175.6 L350.9 184.6 L350.9 193.6 L351.0 202.6 L351.0 211.6 L351.1 220.6 L351.1 229.6M357.9 155.1 L357.9 164.1 L358.0 173.0 L358.0 182.0 L358.1 191.0 L358.1 200.0 L358.2 209.0 L358.2 218.0 L358.3 227.0M365.0 152.6 L365.1 161.6 L365.1 170.5 L365.2 179.5 L365.2 188.5 L365.3 197.5 L365.3 206.4 L365.3 215.4 L365.4 224.4M350.8 157.6 L357.9 155.1 L365.0 152.6M350.8 166.6 L357.9 164.1 L365.1 161.6M350.8 175.6 L358.0 173.0 L365.1 170.5M350.9 184.6 L358.0 182.0 L365.2 179.5M350.9 193.6 L358.1 191.0 L365.2 188.5M351.0 202.6 L358.1 200.0 L365.3 197.5M351.0 211.6 L358.2 209.0 L365.3 206.4M351.1 220.6 L358.2 218.0 L365.3 215.4M351.1 229.6 L358.3 227.0 L365.4 224.4M350.8 166.6L357.9 155.1M350.8 175.6L357.9 164.1M350.9 184.6L358.0 173.0M350.9 193.6L358.0 182.0M351.0 202.6L358.1 191.0M351.0 211.6L358.1 200.0M351.1 220.6L358.2 209.0M351.1 229.6L358.2 218.0M357.9 164.1L365.0 152.6M358.0 173.0L365.1 161.6M358.0 182.0L365.1 170.5M358.1 191.0L365.2 179.5M358.1 200.0L365.2 188.5M358.2 209.0L365.3 197.5M358.2 218.0L365.3 206.4M358.3 227.0L365.3 215.4" fill="none" stroke="#0c0c0c" stroke-width="1.25" stroke-linejoin="round"/><path d="M336.3 145.3L365.0 152.6L350.8 157.6L321.9 150.3Z" fill="#9a584e"/><path d="M336.3 145.3 L331.5 147.0 L326.7 148.6 L321.9 150.3M342.1 146.8 L337.3 148.4 L332.5 150.1 L327.7 151.7M347.8 148.2 L343.0 149.9 L338.3 151.5 L333.5 153.2M353.5 149.7 L348.8 151.3 L344.0 153.0 L339.2 154.7M359.3 151.1 L354.5 152.8 L349.8 154.4 L345.0 156.1M365.0 152.6 L360.3 154.2 L355.5 155.9 L350.8 157.6M336.3 145.3 L342.1 146.8 L347.8 148.2 L353.5 149.7 L359.3 151.1 L365.0 152.6M331.5 147.0 L337.3 148.4 L343.0 149.9 L348.8 151.3 L354.5 152.8 L360.3 154.2M326.7 148.6 L332.5 150.1 L338.3 151.5 L344.0 153.0 L349.8 154.4 L355.5 155.9M321.9 150.3 L327.7 151.7 L333.5 153.2 L339.2 154.7 L345.0 156.1 L350.8 157.6M336.3 145.3L337.3 148.4M326.7 148.6L337.3 148.4M326.7 148.6L327.7 151.7M337.3 148.4L347.8 148.2M337.3 148.4L338.3 151.5M327.7 151.7L338.3 151.5M347.8 148.2L348.8 151.3M338.3 151.5L348.8 151.3M338.3 151.5L339.2 154.7M348.8 151.3L359.3 151.1M348.8 151.3L349.8 154.4M339.2 154.7L349.8 154.4M359.3 151.1L360.3 154.2M349.8 154.4L360.3 154.2M349.8 154.4L350.8 157.6" fill="none" stroke="#0c0c0c" stroke-width="1.0" stroke-linejoin="round"/><path d="M60.7 198.7L110.1 211.3L110.3 371.3L60.7 358.6Z" fill="#a1a1a1"/><path d="M60.7 198.7 L60.7 216.5 L60.7 234.2 L60.7 251.9 L60.7 269.7 L60.7 287.5 L60.7 305.2 L60.7 323.0 L60.7 340.8 L60.7 358.6M77.1 202.9 L77.1 220.6 L77.2 238.4 L77.2 256.1 L77.2 273.9 L77.2 291.7 L77.2 309.5 L77.2 327.2 L77.2 345.0 L77.2 362.9M93.6 207.1 L93.6 224.8 L93.6 242.6 L93.6 260.3 L93.7 278.1 L93.7 295.9 L93.7 313.7 L93.7 331.5 L93.7 349.3 L93.7 367.1M110.1 211.3 L110.1 229.0 L110.1 246.8 L110.1 264.5 L110.2 282.3 L110.2 300.1 L110.2 317.9 L110.2 335.7 L110.2 353.5 L110.3 371.3M60.7 198.7 L77.1 202.9 L93.6 207.1 L110.1 211.3M60.7 216.5 L77.1 220.6 L93.6 224.8 L110.1 229.0M60.7 234.2 L77.2 238.4 L93.6 242.6 L110.1 246.8M60.7 251.9 L77.2 256.1 L93.6 260.3 L110.1 264.5M60.7 269.7 L77.2 273.9 L93.7 278.1 L110.2 282.3M60.7 287.5 L77.2 291.7 L93.7 295.9 L110.2 300.1M60.7 305.2 L77.2 309.5 L93.7 313.7 L110.2 317.9M60.7 323.0 L77.2 327.2 L93.7 331.5 L110.2 335.7M60.7 340.8 L77.2 345.0 L93.7 349.3 L110.2 353.5M60.7 358.6 L77.2 362.9 L93.7 367.1 L110.3 371.3M60.7 216.5L77.1 202.9M60.7 234.2L77.1 220.6M60.7 251.9L77.2 238.4M60.7 269.7L77.2 256.1M60.7 287.5L77.2 273.9M60.7 305.2L77.2 291.7M60.7 323.0L77.2 309.5M60.7 340.8L77.2 327.2M60.7 358.6L77.2 345.0M77.1 220.6L93.6 207.1M77.2 238.4L93.6 224.8M77.2 256.1L93.6 242.6M77.2 273.9L93.6 260.3M77.2 291.7L93.7 278.1M77.2 309.5L93.7 295.9M77.2 327.2L93.7 313.7M77.2 345.0L93.7 331.5M77.2 362.9L93.7 349.3M93.6 224.8L110.1 211.3M93.6 242.6L110.1 229.0M93.6 260.3L110.1 246.8M93.7 278.1L110.1 264.5M93.7 295.9L110.2 282.3M93.7 313.7L110.2 300.1M93.7 331.5L110.2 317.9M93.7 349.3L110.2 335.7M93.7 367.1L110.2 353.5" fill="none" stroke="#0c0c0c" stroke-width="0.95" stroke-linejoin="round"/><path d="M110.1 211.3L145.7 199.1L146.0 357.8L110.3 371.3Z" fill="#bdbdbd"/><path d="M110.1 211.3 L128.0 205.2 L145.7 199.1M110.1 226.6 L119.0 226.1 L135.0 218.4 L145.7 216.0M110.1 241.7 L126.2 240.6 L145.8 233.7M110.1 256.6 L119.5 255.6 L139.4 251.7 L145.8 245.4M110.2 276.1 L125.7 271.9 L145.8 264.5M110.2 293.2 L117.1 291.7 L136.7 283.2 L145.8 281.2M110.2 308.9 L131.2 296.5 L145.9 296.3M110.2 321.8 L116.8 323.8 L137.7 315.9 L145.9 307.1M110.2 341.2 L125.1 332.5 L145.9 323.8M110.2 352.6 L117.7 352.2 L136.3 348.2 L145.9 339.4M110.3 371.3 L128.2 364.5 L146.0 357.8M110.1 211.3L110.1 226.6M110.1 211.3L119.0 226.1M128.0 205.2L119.0 226.1M128.0 205.2L135.0 218.4M145.7 199.1L135.0 218.4M145.7 199.1L145.7 216.0M110.1 226.6L110.1 241.7M119.0 226.1L110.1 241.7M119.0 226.1L126.2 240.6M135.0 218.4L126.2 240.6M145.7 216.0L126.2 240.6M145.7 216.0L145.8 233.7M110.1 241.7L110.1 256.6M110.1 241.7L119.5 255.6M126.2 240.6L119.5 255.6M126.2 240.6L139.4 251.7M145.8 233.7L139.4 251.7M145.8 233.7L145.8 245.4M110.1 256.6L110.2 276.1M119.5 255.6L110.2 276.1M119.5 255.6L125.7 271.9M139.4 251.7L125.7 271.9M145.8 245.4L125.7 271.9M145.8 245.4L145.8 264.5M110.2 276.1L110.2 293.2M110.2 276.1L117.1 291.7M125.7 271.9L117.1 291.7M125.7 271.9L136.7 283.2M145.8 264.5L136.7 283.2M145.8 264.5L145.8 281.2M110.2 293.2L110.2 308.9M117.1 291.7L110.2 308.9M117.1 291.7L131.2 296.5M136.7 283.2L131.2 296.5M145.8 281.2L131.2 296.5M145.8 281.2L145.9 296.3M110.2 308.9L110.2 321.8M110.2 308.9L116.8 323.8M131.2 296.5L116.8 323.8M131.2 296.5L137.7 315.9M145.9 296.3L137.7 315.9M145.9 296.3L145.9 307.1M110.2 321.8L110.2 341.2M116.8 323.8L110.2 341.2M116.8 323.8L125.1 332.5M137.7 315.9L125.1 332.5M145.9 307.1L125.1 332.5M145.9 307.1L145.9 323.8M110.2 341.2L110.2 352.6M110.2 341.2L117.7 352.2M125.1 332.5L117.7 352.2M125.1 332.5L136.3 348.2M145.9 323.8L136.3 348.2M145.9 323.8L145.9 339.4M110.2 352.6L110.3 371.3M117.7 352.2L110.3 371.3M117.7 352.2L128.2 364.5M136.3 348.2L128.2 364.5M145.9 339.4L128.2 364.5M145.9 339.4L146.0 357.8" fill="none" stroke="#0c0c0c" stroke-width="0.95" stroke-linejoin="round"/><path d="M96.7 186.6L145.7 199.1L110.1 211.3L60.7 198.7Z" fill="#c4c4c4"/><path d="M96.7 186.6 L78.7 192.7 L60.7 198.7M113.0 190.8 L99.3 198.1 L77.1 202.9M129.3 194.9 L112.3 201.0 L93.6 207.1M145.7 199.1 L128.0 205.2 L110.1 211.3M96.7 186.6 L113.0 190.8 L129.3 194.9 L145.7 199.1M78.7 192.7 L99.3 198.1 L112.3 201.0 L128.0 205.2M60.7 198.7 L77.1 202.9 L93.6 207.1 L110.1 211.3M96.7 186.6L99.3 198.1M78.7 192.7L77.1 202.9M99.3 198.1L129.3 194.9M77.1 202.9L112.3 201.0M129.3 194.9L128.0 205.2M93.6 207.1L128.0 205.2" fill="none" stroke="#0c0c0c" stroke-width="0.95" stroke-linejoin="round"/><path d="M121.6 214.2L171.2 226.8L171.6 387.0L121.8 374.2Z" fill="#a1a1a1"/><path d="M121.6 214.2 L121.6 232.0 L121.6 249.7 L121.6 267.5 L121.6 285.2 L121.7 303.0 L121.7 320.8 L121.7 338.6 L121.7 356.4 L121.8 374.2M138.1 218.4 L138.1 236.2 L138.2 253.9 L138.2 271.7 L138.2 289.5 L138.2 307.3 L138.3 325.0 L138.3 342.8 L138.3 360.7 L138.4 378.5M154.7 222.6 L154.7 240.4 L154.7 258.1 L154.8 275.9 L154.8 293.7 L154.8 311.5 L154.9 329.3 L154.9 347.1 L154.9 364.9 L155.0 382.7M171.2 226.8 L171.3 244.6 L171.3 262.4 L171.3 280.1 L171.4 297.9 L171.4 315.7 L171.4 333.5 L171.5 351.3 L171.5 369.1 L171.6 387.0M121.6 214.2 L138.1 218.4 L154.7 222.6 L171.2 226.8M121.6 232.0 L138.1 236.2 L154.7 240.4 L171.3 244.6M121.6 249.7 L138.2 253.9 L154.7 258.1 L171.3 262.4M121.6 267.5 L138.2 271.7 L154.8 275.9 L171.3 280.1M121.6 285.2 L138.2 289.5 L154.8 293.7 L171.4 297.9M121.7 303.0 L138.2 307.3 L154.8 311.5 L171.4 315.7M121.7 320.8 L138.3 325.0 L154.9 329.3 L171.4 333.5M121.7 338.6 L138.3 342.8 L154.9 347.1 L171.5 351.3M121.7 356.4 L138.3 360.7 L154.9 364.9 L171.5 369.1M121.8 374.2 L138.4 378.5 L155.0 382.7 L171.6 387.0M121.6 232.0L138.1 218.4M121.6 249.7L138.1 236.2M121.6 267.5L138.2 253.9M121.6 285.2L138.2 271.7M121.7 303.0L138.2 289.5M121.7 320.8L138.2 307.3M121.7 338.6L138.3 325.0M121.7 356.4L138.3 342.8M121.8 374.2L138.3 360.7M138.1 236.2L154.7 222.6M138.2 253.9L154.7 240.4M138.2 271.7L154.7 258.1M138.2 289.5L154.8 275.9M138.2 307.3L154.8 293.7M138.3 325.0L154.8 311.5M138.3 342.8L154.9 329.3M138.3 360.7L154.9 347.1M138.4 378.5L154.9 364.9M154.7 240.4L171.2 226.8M154.7 258.1L171.3 244.6M154.8 275.9L171.3 262.4M154.8 293.7L171.3 280.1M154.8 311.5L171.4 297.9M154.9 329.3L171.4 315.7M154.9 347.1L171.4 333.5M154.9 364.9L171.5 351.3M155.0 382.7L171.5 369.1" fill="none" stroke="#0c0c0c" stroke-width="0.95" stroke-linejoin="round"/><path d="M171.2 226.8L206.4 214.5L206.8 373.3L171.6 387.0Z" fill="#bdbdbd"/><path d="M171.2 226.8 L188.9 220.7 L206.4 214.5M171.3 244.9 L177.1 239.2 L201.0 231.9 L206.4 228.2M171.3 259.1 L187.0 253.4 L206.4 245.1M171.3 273.6 L181.0 272.8 L199.1 266.2 L206.5 260.7M171.4 293.1 L189.8 284.5 L206.5 276.4M171.4 305.6 L182.2 305.5 L196.1 300.3 L206.6 291.4M171.4 325.6 L191.1 318.6 L206.6 309.9M171.5 339.3 L178.3 333.7 L194.8 331.9 L206.6 325.2M171.5 356.4 L185.8 350.1 L206.7 338.9M171.5 371.4 L181.7 365.1 L198.8 360.3 L206.7 356.0M171.6 387.0 L189.2 380.1 L206.8 373.3M171.2 226.8L171.3 244.9M171.2 226.8L177.1 239.2M188.9 220.7L177.1 239.2M188.9 220.7L201.0 231.9M206.4 214.5L201.0 231.9M206.4 214.5L206.4 228.2M171.3 244.9L171.3 259.1M177.1 239.2L171.3 259.1M177.1 239.2L187.0 253.4M201.0 231.9L187.0 253.4M206.4 228.2L187.0 253.4M206.4 228.2L206.4 245.1M171.3 259.1L171.3 273.6M171.3 259.1L181.0 272.8M187.0 253.4L181.0 272.8M187.0 253.4L199.1 266.2M206.4 245.1L199.1 266.2M206.4 245.1L206.5 260.7M171.3 273.6L171.4 293.1M181.0 272.8L171.4 293.1M181.0 272.8L189.8 284.5M199.1 266.2L189.8 284.5M206.5 260.7L189.8 284.5M206.5 260.7L206.5 276.4M171.4 293.1L171.4 305.6M171.4 293.1L182.2 305.5M189.8 284.5L182.2 305.5M189.8 284.5L196.1 300.3M206.5 276.4L196.1 300.3M206.5 276.4L206.6 291.4M171.4 305.6L171.4 325.6M182.2 305.5L171.4 325.6M182.2 305.5L191.1 318.6M196.1 300.3L191.1 318.6M206.6 291.4L191.1 318.6M206.6 291.4L206.6 309.9M171.4 325.6L171.5 339.3M171.4 325.6L178.3 333.7M191.1 318.6L178.3 333.7M191.1 318.6L194.8 331.9M206.6 309.9L194.8 331.9M206.6 309.9L206.6 325.2M171.5 339.3L171.5 356.4M178.3 333.7L171.5 356.4M178.3 333.7L185.8 350.1M194.8 331.9L185.8 350.1M206.6 325.2L185.8 350.1M206.6 325.2L206.7 338.9M171.5 356.4L171.5 371.4M171.5 356.4L181.7 365.1M185.8 350.1L181.7 365.1M185.8 350.1L198.8 360.3M206.7 338.9L198.8 360.3M206.7 338.9L206.7 356.0M171.5 371.4L171.6 387.0M181.7 365.1L171.6 387.0M181.7 365.1L189.2 380.1M198.8 360.3L189.2 380.1M206.7 356.0L189.2 380.1M206.7 356.0L206.8 373.3" fill="none" stroke="#0c0c0c" stroke-width="0.95" stroke-linejoin="round"/><path d="M157.1 202.0L206.4 214.5L171.2 226.8L121.6 214.2Z" fill="#c4c4c4"/><path d="M157.1 202.0 L139.4 208.1 L121.6 214.2M173.5 206.2 L155.7 213.2 L138.1 218.4M189.9 210.3 L171.5 214.0 L154.7 222.6M206.4 214.5 L188.9 220.7 L171.2 226.8M157.1 202.0 L173.5 206.2 L189.9 210.3 L206.4 214.5M139.4 208.1 L155.7 213.2 L171.5 214.0 L188.9 220.7M121.6 214.2 L138.1 218.4 L154.7 222.6 L171.2 226.8M157.1 202.0L155.7 213.2M139.4 208.1L138.1 218.4M155.7 213.2L189.9 210.3M138.1 218.4L171.5 214.0M189.9 210.3L188.9 220.7M154.7 222.6L188.9 220.7" fill="none" stroke="#0c0c0c" stroke-width="0.95" stroke-linejoin="round"/><path d="M194.0 232.6L243.2 245.2L243.7 405.4L194.4 392.8Z" fill="#a1a1a1"/><path d="M194.0 232.6 L194.0 250.4 L194.1 268.2 L194.1 285.9 L194.2 303.7 L194.2 321.5 L194.2 339.3 L194.3 357.1 L194.3 375.0 L194.4 392.8M210.4 236.8 L210.4 254.6 L210.5 272.3 L210.5 290.1 L210.6 307.9 L210.6 325.7 L210.7 343.5 L210.7 361.3 L210.8 379.2 L210.8 397.0M226.8 241.0 L226.8 258.7 L226.9 276.5 L226.9 294.3 L227.0 312.1 L227.0 329.9 L227.1 347.7 L227.2 365.5 L227.2 383.4 L227.3 401.2M243.2 245.2 L243.3 262.9 L243.3 280.7 L243.4 298.5 L243.4 316.3 L243.5 334.1 L243.5 351.9 L243.6 369.7 L243.6 387.6 L243.7 405.4M194.0 232.6 L210.4 236.8 L226.8 241.0 L243.2 245.2M194.0 250.4 L210.4 254.6 L226.8 258.7 L243.3 262.9M194.1 268.2 L210.5 272.3 L226.9 276.5 L243.3 280.7M194.1 285.9 L210.5 290.1 L226.9 294.3 L243.4 298.5M194.2 303.7 L210.6 307.9 L227.0 312.1 L243.4 316.3M194.2 321.5 L210.6 325.7 L227.0 329.9 L243.5 334.1M194.2 339.3 L210.7 343.5 L227.1 347.7 L243.5 351.9M194.3 357.1 L210.7 361.3 L227.2 365.5 L243.6 369.7M194.3 375.0 L210.8 379.2 L227.2 383.4 L243.6 387.6M194.4 392.8 L210.8 397.0 L227.3 401.2 L243.7 405.4M194.0 250.4L210.4 236.8M194.1 268.2L210.4 254.6M194.1 285.9L210.5 272.3M194.2 303.7L210.5 290.1M194.2 321.5L210.6 307.9M194.2 339.3L210.6 325.7M194.3 357.1L210.7 343.5M194.3 375.0L210.7 361.3M194.4 392.8L210.8 379.2M210.4 254.6L226.8 241.0M210.5 272.3L226.8 258.7M210.5 290.1L226.9 276.5M210.6 307.9L226.9 294.3M210.6 325.7L227.0 312.1M210.7 343.5L227.0 329.9M210.7 361.3L227.1 347.7M210.8 379.2L227.2 365.5M210.8 397.0L227.2 383.4M226.8 258.7L243.2 245.2M226.9 276.5L243.3 262.9M226.9 294.3L243.3 280.7M227.0 312.1L243.4 298.5M227.0 329.9L243.4 316.3M227.1 347.7L243.5 334.1M227.2 365.5L243.5 351.9M227.2 383.4L243.6 369.7M227.3 401.2L243.6 387.6" fill="none" stroke="#0c0c0c" stroke-width="0.95" stroke-linejoin="round"/><path d="M243.2 245.2L277.8 232.7L278.4 391.6L243.7 405.4Z" fill="#bdbdbd"/><path d="M243.2 245.2 L260.6 238.9 L277.8 232.7M243.2 259.7 L252.4 255.4 L272.4 250.1 L277.9 251.6M243.3 279.9 L262.5 269.8 L277.9 265.4M243.4 292.7 L253.9 287.5 L272.6 284.8 L278.0 282.9M243.4 311.9 L261.3 299.4 L278.0 299.1M243.5 325.1 L250.2 325.6 L271.0 317.6 L278.1 315.2M243.5 343.2 L259.2 334.2 L278.1 329.4M243.6 360.0 L250.1 356.9 L268.8 350.2 L278.2 344.1M243.6 376.1 L258.8 369.1 L278.2 358.4M243.7 389.8 L253.7 384.4 L271.6 380.9 L278.3 375.5M243.7 405.4 L261.1 398.5 L278.4 391.6M243.2 245.2L243.2 259.7M243.2 245.2L252.4 255.4M260.6 238.9L252.4 255.4M260.6 238.9L272.4 250.1M277.8 232.7L272.4 250.1M277.8 232.7L277.9 251.6M243.2 259.7L243.3 279.9M252.4 255.4L243.3 279.9M252.4 255.4L262.5 269.8M272.4 250.1L262.5 269.8M277.9 251.6L262.5 269.8M277.9 251.6L277.9 265.4M243.3 279.9L243.4 292.7M243.3 279.9L253.9 287.5M262.5 269.8L253.9 287.5M262.5 269.8L272.6 284.8M277.9 265.4L272.6 284.8M277.9 265.4L278.0 282.9M243.4 292.7L243.4 311.9M253.9 287.5L243.4 311.9M253.9 287.5L261.3 299.4M272.6 284.8L261.3 299.4M278.0 282.9L261.3 299.4M278.0 282.9L278.0 299.1M243.4 311.9L243.5 325.1M243.4 311.9L250.2 325.6M261.3 299.4L250.2 325.6M261.3 299.4L271.0 317.6M278.0 299.1L271.0 317.6M278.0 299.1L278.1 315.2M243.5 325.1L243.5 343.2M250.2 325.6L243.5 343.2M250.2 325.6L259.2 334.2M271.0 317.6L259.2 334.2M278.1 315.2L259.2 334.2M278.1 315.2L278.1 329.4M243.5 343.2L243.6 360.0M243.5 343.2L250.1 356.9M259.2 334.2L250.1 356.9M259.2 334.2L268.8 350.2M278.1 329.4L268.8 350.2M278.1 329.4L278.2 344.1M243.6 360.0L243.6 376.1M250.1 356.9L243.6 376.1M250.1 356.9L258.8 369.1M268.8 350.2L258.8 369.1M278.2 344.1L258.8 369.1M278.2 344.1L278.2 358.4M243.6 376.1L243.7 389.8M243.6 376.1L253.7 384.4M258.8 369.1L253.7 384.4M258.8 369.1L271.6 380.9M278.2 358.4L271.6 380.9M278.2 358.4L278.3 375.5M243.7 389.8L243.7 405.4M253.7 384.4L243.7 405.4M253.7 384.4L261.1 398.5M271.6 380.9L261.1 398.5M278.3 375.5L261.1 398.5M278.3 375.5L278.4 391.6" fill="none" stroke="#0c0c0c" stroke-width="0.95" stroke-linejoin="round"/><path d="M228.9 220.3L277.8 232.7L243.2 245.2L194.0 232.6Z" fill="#c4c4c4"/><path d="M228.9 220.3 L211.5 226.4 L194.0 232.6M245.2 224.4 L228.3 232.7 L210.4 236.8M261.5 228.5 L248.0 232.9 L226.8 241.0M277.8 232.7 L260.6 238.9 L243.2 245.2M228.9 220.3 L245.2 224.4 L261.5 228.5 L277.8 232.7M211.5 226.4 L228.3 232.7 L248.0 232.9 L260.6 238.9M194.0 232.6 L210.4 236.8 L226.8 241.0 L243.2 245.2M211.5 226.4L245.2 224.4M194.0 232.6L228.3 232.7M245.2 224.4L248.0 232.9M210.4 236.8L248.0 232.9M261.5 228.5L260.6 238.9M248.0 232.9L243.2 245.2" fill="none" stroke="#0c0c0c" stroke-width="0.95" stroke-linejoin="round"/><path d="M253.5 247.8L302.4 260.2L303.0 420.6L254.1 408.1Z" fill="#a1a1a1"/><path d="M253.5 247.8 L253.6 265.6 L253.6 283.3 L253.7 301.1 L253.8 318.9 L253.8 336.7 L253.9 354.6 L253.9 372.4 L254.0 390.2 L254.1 408.1M269.8 251.9 L269.9 269.7 L269.9 287.5 L270.0 305.3 L270.1 323.1 L270.1 340.9 L270.2 358.7 L270.3 376.5 L270.3 394.4 L270.4 412.2M286.1 256.1 L286.2 273.8 L286.2 291.6 L286.3 309.4 L286.4 327.2 L286.4 345.1 L286.5 362.9 L286.6 380.7 L286.6 398.6 L286.7 416.4M302.4 260.2 L302.5 278.0 L302.5 295.8 L302.6 313.6 L302.7 331.4 L302.8 349.2 L302.8 367.0 L302.9 384.9 L303.0 402.7 L303.0 420.6M253.5 247.8 L269.8 251.9 L286.1 256.1 L302.4 260.2M253.6 265.6 L269.9 269.7 L286.2 273.8 L302.5 278.0M253.6 283.3 L269.9 287.5 L286.2 291.6 L302.5 295.8M253.7 301.1 L270.0 305.3 L286.3 309.4 L302.6 313.6M253.8 318.9 L270.1 323.1 L286.4 327.2 L302.7 331.4M253.8 336.7 L270.1 340.9 L286.4 345.1 L302.8 349.2M253.9 354.6 L270.2 358.7 L286.5 362.9 L302.8 367.0M253.9 372.4 L270.3 376.5 L286.6 380.7 L302.9 384.9M254.0 390.2 L270.3 394.4 L286.6 398.6 L303.0 402.7M254.1 408.1 L270.4 412.2 L286.7 416.4 L303.0 420.6M253.6 265.6L269.8 251.9M253.6 283.3L269.9 269.7M253.7 301.1L269.9 287.5M253.8 318.9L270.0 305.3M253.8 336.7L270.1 323.1M253.9 354.6L270.1 340.9M253.9 372.4L270.2 358.7M254.0 390.2L270.3 376.5M254.1 408.1L270.3 394.4M269.9 269.7L286.1 256.1M269.9 287.5L286.2 273.8M270.0 305.3L286.2 291.6M270.1 323.1L286.3 309.4M270.1 340.9L286.4 327.2M270.2 358.7L286.4 345.1M270.3 376.5L286.5 362.9M270.3 394.4L286.6 380.7M270.4 412.2L286.6 398.6M286.2 273.8L302.4 260.2M286.2 291.6L302.5 278.0M286.3 309.4L302.5 295.8M286.4 327.2L302.6 313.6M286.4 345.1L302.7 331.4M286.5 362.9L302.8 349.2M286.6 380.7L302.8 367.0M286.6 398.6L302.9 384.9M286.7 416.4L303.0 402.7" fill="none" stroke="#0c0c0c" stroke-width="0.95" stroke-linejoin="round"/><path d="M302.4 260.2L336.5 247.6L337.2 406.6L303.0 420.6Z" fill="#bdbdbd"/><path d="M302.4 260.2 L319.5 253.9 L336.5 247.6M302.5 278.4 L308.8 272.7 L329.0 268.7 L336.6 264.4M302.5 292.0 L320.8 288.3 L336.7 279.9M302.6 310.6 L313.7 305.6 L330.1 299.8 L336.7 296.6M302.7 325.0 L320.1 314.6 L336.8 313.7M302.7 341.8 L313.4 337.9 L330.6 329.7 L336.9 325.3M302.8 354.1 L320.6 351.0 L336.9 340.3M302.9 372.9 L313.1 371.3 L328.6 362.4 L337.0 360.1M302.9 388.5 L321.5 378.0 L337.1 371.8M303.0 402.2 L311.8 401.0 L330.7 396.4 L337.2 389.5M303.0 420.6 L320.2 413.6 L337.2 406.6M302.4 260.2L302.5 278.4M302.4 260.2L308.8 272.7M319.5 253.9L308.8 272.7M319.5 253.9L329.0 268.7M336.5 247.6L329.0 268.7M336.5 247.6L336.6 264.4M302.5 278.4L302.5 292.0M308.8 272.7L302.5 292.0M308.8 272.7L320.8 288.3M329.0 268.7L320.8 288.3M336.6 264.4L320.8 288.3M336.6 264.4L336.7 279.9M302.5 292.0L302.6 310.6M302.5 292.0L313.7 305.6M320.8 288.3L313.7 305.6M320.8 288.3L330.1 299.8M336.7 279.9L330.1 299.8M336.7 279.9L336.7 296.6M302.6 310.6L302.7 325.0M313.7 305.6L302.7 325.0M313.7 305.6L320.1 314.6M330.1 299.8L320.1 314.6M336.7 296.6L320.1 314.6M336.7 296.6L336.8 313.7M302.7 325.0L302.7 341.8M302.7 325.0L313.4 337.9M320.1 314.6L313.4 337.9M320.1 314.6L330.6 329.7M336.8 313.7L330.6 329.7M336.8 313.7L336.9 325.3M302.7 341.8L302.8 354.1M313.4 337.9L302.8 354.1M313.4 337.9L320.6 351.0M330.6 329.7L320.6 351.0M336.9 325.3L320.6 351.0M336.9 325.3L336.9 340.3M302.8 354.1L302.9 372.9M302.8 354.1L313.1 371.3M320.6 351.0L313.1 371.3M320.6 351.0L328.6 362.4M336.9 340.3L328.6 362.4M336.9 340.3L337.0 360.1M302.9 372.9L302.9 388.5M313.1 371.3L302.9 388.5M313.1 371.3L321.5 378.0M328.6 362.4L321.5 378.0M337.0 360.1L321.5 378.0M337.0 360.1L337.1 371.8M302.9 388.5L303.0 402.2M302.9 388.5L311.8 401.0M321.5 378.0L311.8 401.0M321.5 378.0L330.7 396.4M337.1 371.8L330.7 396.4M337.1 371.8L337.2 389.5M303.0 402.2L303.0 420.6M311.8 401.0L303.0 420.6M311.8 401.0L320.2 413.6M330.7 396.4L320.2 413.6M337.2 389.5L320.2 413.6M337.2 389.5L337.2 406.6" fill="none" stroke="#0c0c0c" stroke-width="0.95" stroke-linejoin="round"/><path d="M288.0 235.3L336.5 247.6L302.4 260.2L253.5 247.8Z" fill="#c4c4c4"/><path d="M288.0 235.3 L270.8 241.5 L253.5 247.8M304.2 239.4 L284.3 245.1 L269.8 251.9M320.3 243.5 L302.0 250.7 L286.1 256.1M336.5 247.6 L319.5 253.9 L302.4 260.2M288.0 235.3 L304.2 239.4 L320.3 243.5 L336.5 247.6M270.8 241.5 L284.3 245.1 L302.0 250.7 L319.5 253.9M253.5 247.8 L269.8 251.9 L286.1 256.1 L302.4 260.2M270.8 241.5L304.2 239.4M270.8 241.5L269.8 251.9M304.2 239.4L302.0 250.7M284.3 245.1L286.1 256.1M320.3 243.5L319.5 253.9M302.0 250.7L302.4 260.2" fill="none" stroke="#0c0c0c" stroke-width="0.95" stroke-linejoin="round"/><path d="M86.2 123.5L115.3 130.9L115.4 203.8L86.2 196.4Z" fill="#b0665c"/><path d="M86.2 123.5 L86.2 132.6 L86.2 141.7 L86.2 150.8 L86.2 159.9 L86.2 169.0 L86.2 178.2 L86.2 187.3 L86.2 196.4M92.0 125.0 L92.0 134.1 L92.0 143.2 L92.0 152.3 L92.0 161.4 L92.0 170.5 L92.0 179.6 L92.0 188.7 L92.0 197.9M97.8 126.5 L97.8 135.6 L97.8 144.7 L97.8 153.8 L97.8 162.9 L97.8 172.0 L97.9 181.1 L97.9 190.2 L97.9 199.3M103.6 128.0 L103.6 137.1 L103.6 146.2 L103.6 155.3 L103.7 164.4 L103.7 173.5 L103.7 182.6 L103.7 191.7 L103.7 200.8M109.4 129.4 L109.5 138.5 L109.5 147.6 L109.5 156.7 L109.5 165.8 L109.5 175.0 L109.5 184.1 L109.5 193.2 L109.5 202.3M115.3 130.9 L115.3 140.0 L115.3 149.1 L115.3 158.2 L115.3 167.3 L115.3 176.4 L115.3 185.6 L115.3 194.7 L115.4 203.8M86.2 123.5 L92.0 125.0 L97.8 126.5 L103.6 128.0 L109.4 129.4 L115.3 130.9M86.2 132.6 L92.0 134.1 L97.8 135.6 L103.6 137.1 L109.5 138.5 L115.3 140.0M86.2 141.7 L92.0 143.2 L97.8 144.7 L103.6 146.2 L109.5 147.6 L115.3 149.1M86.2 150.8 L92.0 152.3 L97.8 153.8 L103.6 155.3 L109.5 156.7 L115.3 158.2M86.2 159.9 L92.0 161.4 L97.8 162.9 L103.7 164.4 L109.5 165.8 L115.3 167.3M86.2 169.0 L92.0 170.5 L97.8 172.0 L103.7 173.5 L109.5 175.0 L115.3 176.4M86.2 178.2 L92.0 179.6 L97.9 181.1 L103.7 182.6 L109.5 184.1 L115.3 185.6M86.2 187.3 L92.0 188.7 L97.9 190.2 L103.7 191.7 L109.5 193.2 L115.3 194.7M86.2 196.4 L92.0 197.9 L97.9 199.3 L103.7 200.8 L109.5 202.3 L115.4 203.8M86.2 132.6L92.0 125.0M86.2 141.7L92.0 134.1M86.2 150.8L92.0 143.2M86.2 159.9L92.0 152.3M86.2 169.0L92.0 161.4M86.2 178.2L92.0 170.5M86.2 187.3L92.0 179.6M86.2 196.4L92.0 188.7M92.0 134.1L97.8 126.5M92.0 143.2L97.8 135.6M92.0 152.3L97.8 144.7M92.0 161.4L97.8 153.8M92.0 170.5L97.8 162.9M92.0 179.6L97.8 172.0M92.0 188.7L97.9 181.1M92.0 197.9L97.9 190.2M97.8 135.6L103.6 128.0M97.8 144.7L103.6 137.1M97.8 153.8L103.6 146.2M97.8 162.9L103.6 155.3M97.8 172.0L103.7 164.4M97.9 181.1L103.7 173.5M97.9 190.2L103.7 182.6M97.9 199.3L103.7 191.7M103.6 137.1L109.4 129.4M103.6 146.2L109.5 138.5M103.6 155.3L109.5 147.6M103.7 164.4L109.5 156.7M103.7 173.5L109.5 165.8M103.7 182.6L109.5 175.0M103.7 191.7L109.5 184.1M103.7 200.8L109.5 193.2M109.5 138.5L115.3 130.9M109.5 147.6L115.3 140.0M109.5 156.7L115.3 149.1M109.5 165.8L115.3 158.2M109.5 175.0L115.3 167.3M109.5 184.1L115.3 176.4M109.5 193.2L115.3 185.6M109.5 202.3L115.3 194.7" fill="none" stroke="#0c0c0c" stroke-width="1.25" stroke-linejoin="round"/><path d="M115.3 130.9L130.5 126.0L130.6 198.6L115.4 203.8Z" fill="#b3695e"/><path d="M115.3 130.9 L115.3 140.0 L115.3 149.1 L115.3 158.2 L115.3 167.3 L115.3 176.4 L115.3 185.6 L115.3 194.7 L115.4 203.8M122.9 128.4 L122.9 137.5 L122.9 146.6 L122.9 155.7 L123.0 164.8 L123.0 173.9 L123.0 183.0 L123.0 192.1 L123.0 201.2M130.5 126.0 L130.5 135.0 L130.6 144.1 L130.6 153.2 L130.6 162.2 L130.6 171.3 L130.6 180.4 L130.6 189.5 L130.6 198.6M115.3 130.9 L122.9 128.4 L130.5 126.0M115.3 140.0 L122.9 137.5 L130.5 135.0M115.3 149.1 L122.9 146.6 L130.6 144.1M115.3 158.2 L122.9 155.7 L130.6 153.2M115.3 167.3 L123.0 164.8 L130.6 162.2M115.3 176.4 L123.0 173.9 L130.6 171.3M115.3 185.6 L123.0 183.0 L130.6 180.4M115.3 194.7 L123.0 192.1 L130.6 189.5M115.4 203.8 L123.0 201.2 L130.6 198.6M115.3 140.0L122.9 128.4M115.3 149.1L122.9 137.5M115.3 158.2L122.9 146.6M115.3 167.3L122.9 155.7M115.3 176.4L123.0 164.8M115.3 185.6L123.0 173.9M115.3 194.7L123.0 183.0M115.4 203.8L123.0 192.1M122.9 137.5L130.5 126.0M122.9 146.6L130.5 135.0M122.9 155.7L130.6 144.1M123.0 164.8L130.6 153.2M123.0 173.9L130.6 162.2M123.0 183.0L130.6 171.3M123.0 192.1L130.6 180.4M123.0 201.2L130.6 189.5" fill="none" stroke="#0c0c0c" stroke-width="1.25" stroke-linejoin="round"/><path d="M101.5 118.6L130.5 126.0L115.3 130.9L86.2 123.5Z" fill="#9a584e"/><path d="M101.5 118.6 L96.4 120.2 L91.3 121.9 L86.2 123.5M107.3 120.1 L102.2 121.7 L97.1 123.4 L92.0 125.0M113.1 121.5 L108.0 123.2 L102.9 124.8 L97.8 126.5M118.9 123.0 L113.8 124.7 L108.7 126.3 L103.6 128.0M124.7 124.5 L119.6 126.1 L114.5 127.8 L109.4 129.4M130.5 126.0 L125.4 127.6 L120.4 129.3 L115.3 130.9M101.5 118.6 L107.3 120.1 L113.1 121.5 L118.9 123.0 L124.7 124.5 L130.5 126.0M96.4 120.2 L102.2 121.7 L108.0 123.2 L113.8 124.7 L119.6 126.1 L125.4 127.6M91.3 121.9 L97.1 123.4 L102.9 124.8 L108.7 126.3 L114.5 127.8 L120.4 129.3M86.2 123.5 L92.0 125.0 L97.8 126.5 L103.6 128.0 L109.4 129.4 L115.3 130.9M101.5 118.6L102.2 121.7M91.3 121.9L102.2 121.7M91.3 121.9L92.0 125.0M102.2 121.7L113.1 121.5M102.2 121.7L102.9 124.8M92.0 125.0L102.9 124.8M113.1 121.5L113.8 124.7M102.9 124.8L113.8 124.7M102.9 124.8L103.6 128.0M113.8 124.7L124.7 124.5M113.8 124.7L114.5 127.8M103.6 128.0L114.5 127.8M124.7 124.5L125.4 127.6M114.5 127.8L125.4 127.6M114.5 127.8L115.3 130.9" fill="none" stroke="#0c0c0c" stroke-width="1.0" stroke-linejoin="round"/><path d="M148.1 139.2L177.2 146.6L177.3 219.6L148.2 212.1Z" fill="#b0665c"/><path d="M148.1 139.2 L148.1 148.3 L148.1 157.4 L148.1 166.5 L148.1 175.7 L148.1 184.8 L148.1 193.9 L148.2 203.0 L148.2 212.1M153.9 140.7 L153.9 149.8 L153.9 158.9 L153.9 168.0 L153.9 177.1 L154.0 186.3 L154.0 195.4 L154.0 204.5 L154.0 213.6M159.7 142.2 L159.7 151.3 L159.7 160.4 L159.8 169.5 L159.8 178.6 L159.8 187.7 L159.8 196.9 L159.8 206.0 L159.8 215.1M165.5 143.7 L165.5 152.8 L165.6 161.9 L165.6 171.0 L165.6 180.1 L165.6 189.2 L165.6 198.3 L165.7 207.5 L165.7 216.6M171.4 145.1 L171.4 154.2 L171.4 163.4 L171.4 172.5 L171.4 181.6 L171.4 190.7 L171.5 199.8 L171.5 208.9 L171.5 218.1M177.2 146.6 L177.2 155.7 L177.2 164.8 L177.2 173.9 L177.3 183.1 L177.3 192.2 L177.3 201.3 L177.3 210.4 L177.3 219.6M148.1 139.2 L153.9 140.7 L159.7 142.2 L165.5 143.7 L171.4 145.1 L177.2 146.6M148.1 148.3 L153.9 149.8 L159.7 151.3 L165.5 152.8 L171.4 154.2 L177.2 155.7M148.1 157.4 L153.9 158.9 L159.7 160.4 L165.6 161.9 L171.4 163.4 L177.2 164.8M148.1 166.5 L153.9 168.0 L159.8 169.5 L165.6 171.0 L171.4 172.5 L177.2 173.9M148.1 175.7 L153.9 177.1 L159.8 178.6 L165.6 180.1 L171.4 181.6 L177.3 183.1M148.1 184.8 L154.0 186.3 L159.8 187.7 L165.6 189.2 L171.4 190.7 L177.3 192.2M148.1 193.9 L154.0 195.4 L159.8 196.9 L165.6 198.3 L171.5 199.8 L177.3 201.3M148.2 203.0 L154.0 204.5 L159.8 206.0 L165.7 207.5 L171.5 208.9 L177.3 210.4M148.2 212.1 L154.0 213.6 L159.8 215.1 L165.7 216.6 L171.5 218.1 L177.3 219.6M148.1 148.3L153.9 140.7M148.1 157.4L153.9 149.8M148.1 166.5L153.9 158.9M148.1 175.7L153.9 168.0M148.1 184.8L153.9 177.1M148.1 193.9L154.0 186.3M148.2 203.0L154.0 195.4M148.2 212.1L154.0 204.5M153.9 149.8L159.7 142.2M153.9 158.9L159.7 151.3M153.9 168.0L159.7 160.4M153.9 177.1L159.8 169.5M154.0 186.3L159.8 178.6M154.0 195.4L159.8 187.7M154.0 204.5L159.8 196.9M154.0 213.6L159.8 206.0M159.7 151.3L165.5 143.7M159.7 160.4L165.5 152.8M159.8 169.5L165.6 161.9M159.8 178.6L165.6 171.0M159.8 187.7L165.6 180.1M159.8 196.9L165.6 189.2M159.8 206.0L165.6 198.3M159.8 215.1L165.7 207.5M165.5 152.8L171.4 145.1M165.6 161.9L171.4 154.2M165.6 171.0L171.4 163.4M165.6 180.1L171.4 172.5M165.6 189.2L171.4 181.6M165.6 198.3L171.4 190.7M165.7 207.5L171.5 199.8M165.7 216.6L171.5 208.9M171.4 154.2L177.2 146.6M171.4 163.4L177.2 155.7M171.4 172.5L177.2 164.8M171.4 181.6L177.2 173.9M171.4 190.7L177.3 183.1M171.5 199.8L177.3 192.2M171.5 208.9L177.3 201.3M171.5 218.1L177.3 210.4" fill="none" stroke="#0c0c0c" stroke-width="1.25" stroke-linejoin="round"/><path d="M177.2 146.6L192.2 141.6L192.4 214.3L177.3 219.6Z" fill="#b3695e"/><path d="M177.2 146.6 L177.2 155.7 L177.2 164.8 L177.2 173.9 L177.3 183.1 L177.3 192.2 L177.3 201.3 L177.3 210.4 L177.3 219.6M184.7 144.1 L184.7 153.2 L184.8 162.3 L184.8 171.4 L184.8 180.5 L184.8 189.6 L184.8 198.7 L184.9 207.8 L184.9 216.9M192.2 141.6 L192.3 150.7 L192.3 159.8 L192.3 168.8 L192.3 177.9 L192.3 187.0 L192.4 196.1 L192.4 205.2 L192.4 214.3M177.2 146.6 L184.7 144.1 L192.2 141.6M177.2 155.7 L184.7 153.2 L192.3 150.7M177.2 164.8 L184.8 162.3 L192.3 159.8M177.2 173.9 L184.8 171.4 L192.3 168.8M177.3 183.1 L184.8 180.5 L192.3 177.9M177.3 192.2 L184.8 189.6 L192.3 187.0M177.3 201.3 L184.8 198.7 L192.4 196.1M177.3 210.4 L184.9 207.8 L192.4 205.2M177.3 219.6 L184.9 216.9 L192.4 214.3M177.2 155.7L184.7 144.1M177.2 164.8L184.7 153.2M177.2 173.9L184.8 162.3M177.3 183.1L184.8 171.4M177.3 192.2L184.8 180.5M177.3 201.3L184.8 189.6M177.3 210.4L184.8 198.7M177.3 219.6L184.9 207.8M184.7 153.2L192.2 141.6M184.8 162.3L192.3 150.7M184.8 171.4L192.3 159.8M184.8 180.5L192.3 168.8M184.8 189.6L192.3 177.9M184.8 198.7L192.3 187.0M184.9 207.8L192.4 196.1M184.9 216.9L192.4 205.2" fill="none" stroke="#0c0c0c" stroke-width="1.25" stroke-linejoin="round"/><path d="M163.2 134.2L192.2 141.6L177.2 146.6L148.1 139.2Z" fill="#9a584e"/><path d="M163.2 134.2 L158.2 135.9 L153.1 137.6 L148.1 139.2M169.0 135.7 L164.0 137.4 L158.9 139.0 L153.9 140.7M174.8 137.2 L169.8 138.8 L164.8 140.5 L159.7 142.2M180.6 138.7 L175.6 140.3 L170.6 142.0 L165.5 143.7M186.4 140.1 L181.4 141.8 L176.4 143.5 L171.4 145.1M192.2 141.6 L187.2 143.3 L182.2 144.9 L177.2 146.6M163.2 134.2 L169.0 135.7 L174.8 137.2 L180.6 138.7 L186.4 140.1 L192.2 141.6M158.2 135.9 L164.0 137.4 L169.8 138.8 L175.6 140.3 L181.4 141.8 L187.2 143.3M153.1 137.6 L158.9 139.0 L164.8 140.5 L170.6 142.0 L176.4 143.5 L182.2 144.9M148.1 139.2 L153.9 140.7 L159.7 142.2 L165.5 143.7 L171.4 145.1 L177.2 146.6M163.2 134.2L164.0 137.4M153.1 137.6L164.0 137.4M153.1 137.6L153.9 140.7M164.0 137.4L174.8 137.2M164.0 137.4L164.8 140.5M153.9 140.7L164.8 140.5M174.8 137.2L175.6 140.3M164.8 140.5L175.6 140.3M164.8 140.5L165.5 143.7M175.6 140.3L186.4 140.1M175.6 140.3L176.4 143.5M165.5 143.7L176.4 143.5M186.4 140.1L187.2 143.3M176.4 143.5L187.2 143.3M176.4 143.5L177.2 146.6" fill="none" stroke="#0c0c0c" stroke-width="1.0" stroke-linejoin="round"/><path d="M209.5 154.8L238.7 162.2L238.9 235.2L209.7 227.8Z" fill="#b0665c"/><path d="M209.5 154.8 L209.5 163.9 L209.6 173.0 L209.6 182.2 L209.6 191.3 L209.6 200.4 L209.7 209.5 L209.7 218.7 L209.7 227.8M215.4 156.3 L215.4 165.4 L215.4 174.5 L215.4 183.6 L215.5 192.8 L215.5 201.9 L215.5 211.0 L215.5 220.1 L215.6 229.3M221.2 157.8 L221.2 166.9 L221.2 176.0 L221.3 185.1 L221.3 194.2 L221.3 203.4 L221.3 212.5 L221.4 221.6 L221.4 230.8M227.0 159.3 L227.0 168.4 L227.1 177.5 L227.1 186.6 L227.1 195.7 L227.1 204.9 L227.2 214.0 L227.2 223.1 L227.2 232.2M232.8 160.7 L232.9 169.9 L232.9 179.0 L232.9 188.1 L233.0 197.2 L233.0 206.3 L233.0 215.5 L233.0 224.6 L233.1 233.7M238.7 162.2 L238.7 171.3 L238.7 180.4 L238.8 189.6 L238.8 198.7 L238.8 207.8 L238.8 216.9 L238.9 226.1 L238.9 235.2M209.5 154.8 L215.4 156.3 L221.2 157.8 L227.0 159.3 L232.8 160.7 L238.7 162.2M209.5 163.9 L215.4 165.4 L221.2 166.9 L227.0 168.4 L232.9 169.9 L238.7 171.3M209.6 173.0 L215.4 174.5 L221.2 176.0 L227.1 177.5 L232.9 179.0 L238.7 180.4M209.6 182.2 L215.4 183.6 L221.3 185.1 L227.1 186.6 L232.9 188.1 L238.8 189.6M209.6 191.3 L215.5 192.8 L221.3 194.2 L227.1 195.7 L233.0 197.2 L238.8 198.7M209.6 200.4 L215.5 201.9 L221.3 203.4 L227.1 204.9 L233.0 206.3 L238.8 207.8M209.7 209.5 L215.5 211.0 L221.3 212.5 L227.2 214.0 L233.0 215.5 L238.8 216.9M209.7 218.7 L215.5 220.1 L221.4 221.6 L227.2 223.1 L233.0 224.6 L238.9 226.1M209.7 227.8 L215.6 229.3 L221.4 230.8 L227.2 232.2 L233.1 233.7 L238.9 235.2M209.5 163.9L215.4 156.3M209.6 173.0L215.4 165.4M209.6 182.2L215.4 174.5M209.6 191.3L215.4 183.6M209.6 200.4L215.5 192.8M209.7 209.5L215.5 201.9M209.7 218.7L215.5 211.0M209.7 227.8L215.5 220.1M215.4 165.4L221.2 157.8M215.4 174.5L221.2 166.9M215.4 183.6L221.2 176.0M215.5 192.8L221.3 185.1M215.5 201.9L221.3 194.2M215.5 211.0L221.3 203.4M215.5 220.1L221.3 212.5M215.6 229.3L221.4 221.6M221.2 166.9L227.0 159.3M221.2 176.0L227.0 168.4M221.3 185.1L227.1 177.5M221.3 194.2L227.1 186.6M221.3 203.4L227.1 195.7M221.3 212.5L227.1 204.9M221.4 221.6L227.2 214.0M221.4 230.8L227.2 223.1M227.0 168.4L232.8 160.7M227.1 177.5L232.9 169.9M227.1 186.6L232.9 179.0M227.1 195.7L232.9 188.1M227.1 204.9L233.0 197.2M227.2 214.0L233.0 206.3M227.2 223.1L233.0 215.5M227.2 232.2L233.0 224.6M232.9 169.9L238.7 162.2M232.9 179.0L238.7 171.3M232.9 188.1L238.7 180.4M233.0 197.2L238.8 189.6M233.0 206.3L238.8 198.7M233.0 215.5L238.8 207.8M233.0 224.6L238.8 216.9M233.1 233.7L238.9 226.1" fill="none" stroke="#0c0c0c" stroke-width="1.25" stroke-linejoin="round"/><path d="M238.7 162.2L253.5 157.1L253.8 229.9L238.9 235.2Z" fill="#b3695e"/><path d="M238.7 162.2 L238.7 171.3 L238.7 180.4 L238.8 189.6 L238.8 198.7 L238.8 207.8 L238.8 216.9 L238.9 226.1 L238.9 235.2M246.1 159.7 L246.1 168.8 L246.2 177.9 L246.2 187.0 L246.2 196.1 L246.3 205.2 L246.3 214.3 L246.3 223.4 L246.4 232.5M253.5 157.1 L253.6 166.2 L253.6 175.3 L253.6 184.4 L253.7 193.5 L253.7 202.6 L253.7 211.7 L253.7 220.8 L253.8 229.9M238.7 162.2 L246.1 159.7 L253.5 157.1M238.7 171.3 L246.1 168.8 L253.6 166.2M238.7 180.4 L246.2 177.9 L253.6 175.3M238.8 189.6 L246.2 187.0 L253.6 184.4M238.8 198.7 L246.2 196.1 L253.7 193.5M238.8 207.8 L246.3 205.2 L253.7 202.6M238.8 216.9 L246.3 214.3 L253.7 211.7M238.9 226.1 L246.3 223.4 L253.7 220.8M238.9 235.2 L246.4 232.5 L253.8 229.9M238.7 171.3L246.1 159.7M238.7 180.4L246.1 168.8M238.8 189.6L246.2 177.9M238.8 198.7L246.2 187.0M238.8 207.8L246.2 196.1M238.8 216.9L246.3 205.2M238.9 226.1L246.3 214.3M238.9 235.2L246.3 223.4M246.1 168.8L253.5 157.1M246.2 177.9L253.6 166.2M246.2 187.0L253.6 175.3M246.2 196.1L253.6 184.4M246.3 205.2L253.7 193.5M246.3 214.3L253.7 202.6M246.3 223.4L253.7 211.7M246.4 232.5L253.7 220.8" fill="none" stroke="#0c0c0c" stroke-width="1.25" stroke-linejoin="round"/><path d="M224.5 149.8L253.5 157.1L238.7 162.2L209.5 154.8Z" fill="#9a584e"/><path d="M224.5 149.8 L219.5 151.5 L214.5 153.1 L209.5 154.8M230.3 151.3 L225.3 152.9 L220.3 154.6 L215.4 156.3M236.1 152.7 L231.1 154.4 L226.2 156.1 L221.2 157.8M241.9 154.2 L237.0 155.9 L232.0 157.6 L227.0 159.3M247.7 155.7 L242.8 157.4 L237.8 159.0 L232.8 160.7M253.5 157.1 L248.6 158.8 L243.6 160.5 L238.7 162.2M224.5 149.8 L230.3 151.3 L236.1 152.7 L241.9 154.2 L247.7 155.7 L253.5 157.1M219.5 151.5 L225.3 152.9 L231.1 154.4 L237.0 155.9 L242.8 157.4 L248.6 158.8M214.5 153.1 L220.3 154.6 L226.2 156.1 L232.0 157.6 L237.8 159.0 L243.6 160.5M209.5 154.8 L215.4 156.3 L221.2 157.8 L227.0 159.3 L232.8 160.7 L238.7 162.2M224.5 149.8L225.3 152.9M214.5 153.1L225.3 152.9M214.5 153.1L215.4 156.3M225.3 152.9L236.1 152.7M225.3 152.9L226.2 156.1M215.4 156.3L226.2 156.1M236.1 152.7L237.0 155.9M226.2 156.1L237.0 155.9M226.2 156.1L227.0 159.3M237.0 155.9L247.7 155.7M237.0 155.9L237.8 159.0M227.0 159.3L237.8 159.0M247.7 155.7L248.6 158.8M237.8 159.0L248.6 158.8M237.8 159.0L238.7 162.2" fill="none" stroke="#0c0c0c" stroke-width="1.0" stroke-linejoin="round"/><path d="M272.3 170.7L301.5 178.1L301.8 251.2L272.6 243.8Z" fill="#b0665c"/><path d="M272.3 170.7 L272.3 179.9 L272.4 189.0 L272.4 198.1 L272.4 207.2 L272.5 216.4 L272.5 225.5 L272.5 234.6 L272.6 243.8M278.1 172.2 L278.2 181.3 L278.2 190.5 L278.2 199.6 L278.3 208.7 L278.3 217.8 L278.3 227.0 L278.4 236.1 L278.4 245.3M284.0 173.7 L284.0 182.8 L284.1 192.0 L284.1 201.1 L284.1 210.2 L284.2 219.3 L284.2 228.5 L284.2 237.6 L284.3 246.7M289.8 175.2 L289.9 184.3 L289.9 193.4 L289.9 202.6 L290.0 211.7 L290.0 220.8 L290.0 230.0 L290.1 239.1 L290.1 248.2M295.7 176.7 L295.7 185.8 L295.7 194.9 L295.8 204.0 L295.8 213.2 L295.8 222.3 L295.9 231.4 L295.9 240.6 L295.9 249.7M301.5 178.1 L301.5 187.3 L301.6 196.4 L301.6 205.5 L301.6 214.7 L301.7 223.8 L301.7 232.9 L301.8 242.1 L301.8 251.2M272.3 170.7 L278.1 172.2 L284.0 173.7 L289.8 175.2 L295.7 176.7 L301.5 178.1M272.3 179.9 L278.2 181.3 L284.0 182.8 L289.9 184.3 L295.7 185.8 L301.5 187.3M272.4 189.0 L278.2 190.5 L284.1 192.0 L289.9 193.4 L295.7 194.9 L301.6 196.4M272.4 198.1 L278.2 199.6 L284.1 201.1 L289.9 202.6 L295.8 204.0 L301.6 205.5M272.4 207.2 L278.3 208.7 L284.1 210.2 L290.0 211.7 L295.8 213.2 L301.6 214.7M272.5 216.4 L278.3 217.8 L284.2 219.3 L290.0 220.8 L295.8 222.3 L301.7 223.8M272.5 225.5 L278.3 227.0 L284.2 228.5 L290.0 230.0 L295.9 231.4 L301.7 232.9M272.5 234.6 L278.4 236.1 L284.2 237.6 L290.1 239.1 L295.9 240.6 L301.8 242.1M272.6 243.8 L278.4 245.3 L284.3 246.7 L290.1 248.2 L295.9 249.7 L301.8 251.2M272.3 179.9L278.1 172.2M272.4 189.0L278.2 181.3M272.4 198.1L278.2 190.5M272.4 207.2L278.2 199.6M272.5 216.4L278.3 208.7M272.5 225.5L278.3 217.8M272.5 234.6L278.3 227.0M272.6 243.8L278.4 236.1M278.2 181.3L284.0 173.7M278.2 190.5L284.0 182.8M278.2 199.6L284.1 192.0M278.3 208.7L284.1 201.1M278.3 217.8L284.1 210.2M278.3 227.0L284.2 219.3M278.4 236.1L284.2 228.5M278.4 245.3L284.2 237.6M284.0 182.8L289.8 175.2M284.1 192.0L289.9 184.3M284.1 201.1L289.9 193.4M284.1 210.2L289.9 202.6M284.2 219.3L290.0 211.7M284.2 228.5L290.0 220.8M284.2 237.6L290.0 230.0M284.3 246.7L290.1 239.1M289.9 184.3L295.7 176.7M289.9 193.4L295.7 185.8M289.9 202.6L295.7 194.9M290.0 211.7L295.8 204.0M290.0 220.8L295.8 213.2M290.0 230.0L295.8 222.3M290.1 239.1L295.9 231.4M290.1 248.2L295.9 240.6M295.7 185.8L301.5 178.1M295.7 194.9L301.5 187.3M295.8 204.0L301.6 196.4M295.8 213.2L301.6 205.5M295.8 222.3L301.6 214.7M295.9 231.4L301.7 223.8M295.9 240.6L301.7 232.9M295.9 249.7L301.8 242.1" fill="none" stroke="#0c0c0c" stroke-width="1.25" stroke-linejoin="round"/><path d="M301.5 178.1L316.1 173.0L316.4 245.8L301.8 251.2Z" fill="#b3695e"/><path d="M301.5 178.1 L301.5 187.3 L301.6 196.4 L301.6 205.5 L301.6 214.7 L301.7 223.8 L301.7 232.9 L301.8 242.1 L301.8 251.2M308.8 175.6 L308.9 184.7 L308.9 193.8 L308.9 202.9 L309.0 212.0 L309.0 221.1 L309.1 230.3 L309.1 239.4 L309.1 248.5M316.1 173.0 L316.2 182.1 L316.2 191.2 L316.3 200.3 L316.3 209.4 L316.3 218.5 L316.4 227.6 L316.4 236.7 L316.4 245.8M301.5 178.1 L308.8 175.6 L316.1 173.0M301.5 187.3 L308.9 184.7 L316.2 182.1M301.6 196.4 L308.9 193.8 L316.2 191.2M301.6 205.5 L308.9 202.9 L316.3 200.3M301.6 214.7 L309.0 212.0 L316.3 209.4M301.7 223.8 L309.0 221.1 L316.3 218.5M301.7 232.9 L309.1 230.3 L316.4 227.6M301.8 242.1 L309.1 239.4 L316.4 236.7M301.8 251.2 L309.1 248.5 L316.4 245.8M301.5 187.3L308.8 175.6M301.6 196.4L308.9 184.7M301.6 205.5L308.9 193.8M301.6 214.7L308.9 202.9M301.7 223.8L309.0 212.0M301.7 232.9L309.0 221.1M301.8 242.1L309.1 230.3M301.8 251.2L309.1 239.4M308.9 184.7L316.1 173.0M308.9 193.8L316.2 182.1M308.9 202.9L316.2 191.2M309.0 212.0L316.3 200.3M309.0 221.1L316.3 209.4M309.1 230.3L316.3 218.5M309.1 239.4L316.4 227.6M309.1 248.5L316.4 236.7" fill="none" stroke="#0c0c0c" stroke-width="1.25" stroke-linejoin="round"/><path d="M287.0 165.6L316.1 173.0L301.5 178.1L272.3 170.7Z" fill="#9a584e"/><path d="M287.0 165.6 L282.1 167.3 L277.2 169.0 L272.3 170.7M292.9 167.1 L288.0 168.8 L283.1 170.5 L278.1 172.2M298.7 168.6 L293.8 170.3 L288.9 172.0 L284.0 173.7M304.5 170.1 L299.6 171.8 L294.7 173.5 L289.8 175.2M310.3 171.5 L305.4 173.3 L300.6 175.0 L295.7 176.7M316.1 173.0 L311.3 174.7 L306.4 176.4 L301.5 178.1M287.0 165.6 L292.9 167.1 L298.7 168.6 L304.5 170.1 L310.3 171.5 L316.1 173.0M282.1 167.3 L288.0 168.8 L293.8 170.3 L299.6 171.8 L305.4 173.3 L311.3 174.7M277.2 169.0 L283.1 170.5 L288.9 172.0 L294.7 173.5 L300.6 175.0 L306.4 176.4M272.3 170.7 L278.1 172.2 L284.0 173.7 L289.8 175.2 L295.7 176.7 L301.5 178.1M287.0 165.6L288.0 168.8M277.2 169.0L288.0 168.8M277.2 169.0L278.1 172.2M288.0 168.8L298.7 168.6M288.0 168.8L288.9 172.0M278.1 172.2L288.9 172.0M298.7 168.6L299.6 171.8M288.9 172.0L299.6 171.8M288.9 172.0L289.8 175.2M299.6 171.8L310.3 171.5M299.6 171.8L300.6 175.0M289.8 175.2L300.6 175.0M310.3 171.5L311.3 174.7M300.6 175.0L311.3 174.7M300.6 175.0L301.5 178.1" fill="none" stroke="#0c0c0c" stroke-width="1.0" stroke-linejoin="round"/><circle cx="148" cy="582" r="6.5" fill="#c8582e"/><path d="M146 580L148.5 583.5L151 579" stroke="#f3c0a0" stroke-width="0.6" fill="none"/></svg><svg style="position:absolute;left:770px;top:535px" width="80" height="90">
  <ellipse cx="27" cy="35.5" rx="13.5" ry="17" transform="rotate(-18 27 35.5)" fill="none" stroke="#ececec" stroke-width="2.6"/>
  <path d="M27 35.5V17M27 35.5L40 31M27 35.5L42.5 39.3" stroke="#dedede" stroke-width="1.6"/>
  <circle cx="27" cy="35.5" r="2.3" fill="#fff" stroke="#cfcfcf" stroke-width="0.9"/>
  <circle cx="27" cy="16.7" r="1.4" fill="#fff" stroke="#bbb" stroke-width="0.7"/>
  <circle cx="40" cy="31" r="1.3" fill="#fff" stroke="#bbb" stroke-width="0.7"/>
  <circle cx="42.5" cy="39.3" r="1.3" fill="#fff" stroke="#bbb" stroke-width="0.7"/>
  <text x="26.6" y="13" font-family="Liberation Sans" font-size="4.5" fill="#444" text-anchor="middle">Z</text>
  <text x="44.4" y="31.5" font-family="Liberation Sans" font-size="4.5" fill="#555" text-anchor="middle">Y</text>
  <text x="47" y="43" font-family="Liberation Sans" font-size="4.5" fill="#555" text-anchor="middle">X</text>
  <path d="M77.8 71.3L66 84L71 85.5L72.5 87Z" fill="#222"/>
  <path d="M77.8 71.3L66 84L71 85.5Z" fill="#555"/>
</svg>
<!-- Simulate dialog -->
<div id="dlg">
  <div class="tabbar"><div class="tab">Simulate</div></div>
  <div class="t" style="left:8.7px;top:26.4px;color:#444">Location:</div>
  <div id="combo"><span class="t" style="left:4.2px;top:3.4px;color:#24506e">Cloud</span>
    <svg style="position:absolute;left:89.5px;top:6.5px" width="7" height="5"><path d="M1 0.8H6L3.5 3.8Z" fill="#1a1a1a"/></svg>
  </div>
  <svg style="position:absolute;left:9.3px;top:56.5px" width="6" height="5"><path d="M0 0H6L3 4.5Z" fill="#333"/></svg>
  <div class="t b" style="left:17.8px;top:53.3px;color:#333">Analysis options</div>
  <div class="cb on" style="left:19.2px;top:71px"><div style="position:absolute;left:2px;top:4.2px;width:6.5px;height:2px;background:#fff"></div></div>
  <div class="t" style="right:108.4px;top:70.6px;color:#555">CPU Cores</div>
  <div style="position:absolute;left:19.2px;top:83.4px;width:237px;height:1px;background:#8a8a8a"></div>

  <div class="cb dis" style="left:19.2px;top:90.2px"></div>
  <div class="t" style="left:33.2px;top:90.4px;color:#bcbcbc">Mold simulation</div>
  <div class="t" style="left:114.2px;top:90.2px;color:#7c7c7c">No mold specified.</div>
  <div class="cb on" style="left:19.2px;top:108.8px"><svg style="position:absolute;left:-0.5px;top:-0.5px" width="10" height="10"><path d="M2 5L4.2 7.2L8.4 2.4" stroke="#fff" stroke-width="1.7" fill="none"/></svg></div>
  <div class="t" style="left:33.2px;top:109.2px;color:#333">Fill simulation</div>
  <div class="cb" style="left:19.2px;top:127.7px"></div>
  <div class="t" style="left:33.2px;top:127.7px;color:#555">Pack+Cool simulation</div>
  <div class="cb" style="left:19.2px;top:146.3px"></div>
  <div class="t" style="left:33.2px;top:146.3px;color:#555">Warp simulation</div>

  <div class="spin" style="top:84.9px"><span>4</span><svg style="position:absolute;left:53.5px;top:2px" width="8" height="13"><path d="M1.4 4H6.6L4 1.3Z" fill="#b8b8b8"/><path d="M1.4 9.2H6.6L4 11.9Z" fill="#b8b8b8"/></svg></div>
  <div class="spin" style="top:103.6px"><span>8</span><svg style="position:absolute;left:53.5px;top:2px" width="8" height="13"><path d="M1.4 4H6.6L4 1.3Z" fill="#b8b8b8"/><path d="M1.4 9.2H6.6L4 11.9Z" fill="#b8b8b8"/></svg></div>
  <div class="spin" style="top:122.3px"><span>8</span><svg style="position:absolute;left:53.5px;top:2px" width="8" height="13"><path d="M1.4 4H6.6L4 1.3Z" fill="#b8b8b8"/><path d="M1.4 9.2H6.6L4 11.9Z" fill="#b8b8b8"/></svg></div>
  <div class="spin" style="top:141.1px"><span>8</span><svg style="position:absolute;left:53.5px;top:2px" width="8" height="13"><path d="M1.4 4H6.6L4 1.3Z" fill="#b8b8b8"/><path d="M1.4 9.2H6.6L4 11.9Z" fill="#b8b8b8"/></svg></div>

  <div class="t" style="left:12.8px;top:170.3px;color:#222;letter-spacing:-0.06px">The simulation is saved automatically, then run in the background.</div>
  <div class="btn" style="left:266.3px">OK</div>
  <div class="btn" style="left:316.4px">Cancel</div>
</div>
<div id="dlist">
  <div class="t" style="left:3.3px;top:2.6px;color:#222">Local interactive</div>
  <div class="t" style="left:3.3px;top:16.5px;color:#222">Local noninteractive</div>
  <div id="dsel"><span class="t" style="left:3px;top:1.2px;color:#fff">Cloud</span></div>
</div>
<div class="redbox" style="left:428.2px;top:90.3px;width:120.6px;height:23.7px"></div>
<!-- Assistant panel -->
<div id="panel">
  <div style="position:absolute;left:0;top:0;width:175px;height:10px;background:#f0f0f0;border-bottom:1px solid #c9c9c9"></div>
  <svg style="position:absolute;left:6px;top:1px" width="5" height="7"><path d="M1 0.8L3.6 3.5L1 6.2" stroke="#555" stroke-width="1.1" fill="none"/></svg>
  <div style="position:absolute;left:1px;top:11px;width:174px;height:16px;background:#d3d6d9;border-bottom:1px solid #c2c5c8"></div>
  <div style="position:absolute;left:1px;top:11px;width:42px;height:17px;background:#f0f0f0"></div>
  <div class="t" style="left:4px;top:12.8px;font-size:9.2px;color:#333">Assistant</div>
  <svg style="position:absolute;left:165px;top:14px" width="9" height="9"><path d="M1 1L8 8M8 1L1 8" stroke="#666" stroke-width="1.2"/></svg>
  <!-- icons -->
  <div class="aic" style="left:99.2px"><svg width="19" height="16" style="position:absolute;left:0;top:3px"><g fill="#3a7ba6"><rect x="2.6" y="1.8" width="2.6" height="1.7"/><rect x="5.6" y="1.8" width="1.6" height="1.7"/><rect x="8.4" y="1.8" width="8.6" height="1.7"/><rect x="2.6" y="4.8" width="2.6" height="1.7"/><rect x="5.6" y="4.8" width="1.6" height="1.7"/><rect x="8.4" y="4.8" width="8.6" height="1.7"/><rect x="2.6" y="7.8" width="2.6" height="1.7"/><rect x="5.6" y="7.8" width="1.6" height="1.7"/><rect x="8.4" y="7.8" width="8.6" height="1.7"/><rect x="2.6" y="10.8" width="2.6" height="1.7"/><rect x="5.6" y="10.8" width="1.6" height="1.7"/><rect x="8.4" y="10.8" width="8.6" height="1.7"/></g></svg></div>
  <div class="aic" style="left:126.2px"><svg width="19" height="16" style="position:absolute;left:0;top:3px"><path d="M3.2 7.5Q9.5 2.2 15.8 7.5Q9.5 12.8 3.2 7.5Z" fill="#f2f2f2" stroke="#555" stroke-width="1"/><circle cx="9.5" cy="7.5" r="2.6" fill="#333"/><circle cx="9" cy="6.8" r="0.7" fill="#999"/></svg></div>
  <div class="aic" style="left:153.2px"><svg width="19" height="16" style="position:absolute;left:0;top:3px"><rect x="9.3" y="2.3" width="2" height="7.6" fill="#b81c22"/><rect x="9.3" y="11" width="2" height="1.8" fill="#b81c22"/></svg></div>
  <!-- checklist -->
  <svg class="chk" style="top:60px"><path d="M1 5L4.5 8.5L11.5 1" stroke="#3a9d2c" stroke-width="2" fill="none"/></svg>
  <div class="t pt" style="top:58.6px">Parts (9)</div>
  <svg class="chk" style="top:79.5px"><path d="M1 5L4.5 8.5L11.5 1" stroke="#3a9d2c" stroke-width="2" fill="none"/></svg>
  <div class="t pt" style="top:78.1px">Materials (9/9)</div>
  <svg class="chk" style="top:99px"><path d="M1 5L4.5 8.5L11.5 1" stroke="#3a9d2c" stroke-width="2" fill="none"/></svg>
  <div class="t pt" style="top:97.6px">Process Settings</div>
  <svg class="chk" style="top:118.5px"><path d="M1 5L4.5 8.5L11.5 1" stroke="#3a9d2c" stroke-width="2" fill="none"/></svg>
  <div class="t pt" style="top:117.1px">Conditions (1)</div>
  <div style="position:absolute;left:4px;top:132.5px;width:174px;height:17px;background:#c3d9ec;border:1px solid #5fa3da;border-radius:1px"></div>
  <div style="position:absolute;left:5.5px;top:136.5px;width:10.5px;height:10.5px;border-radius:50%;background:radial-gradient(circle at 40% 35%,#5cc23f,#2f9a1c)"></div>
  <div class="t pt" style="top:136.6px">Simulate</div>
  <svg style="position:absolute;left:5px;top:156px" width="11" height="11"><circle cx="5.5" cy="5.5" r="4.3" stroke="#d8321f" stroke-width="1.8" fill="none"/><path d="M2.5 2.5L8.5 8.5" stroke="#d8321f" stroke-width="1.8"/></svg>
  <div class="t pt" style="top:156.1px">Results</div>

  <!-- commands -->
  <div style="position:absolute;left:3.6px;top:236px;width:175px;height:15px;background:#dcdcdc"></div>
  <div class="t b" style="left:10px;top:238.6px;font-size:8.8px;color:#333">Commands</div>
  <div style="position:absolute;left:4.7px;top:254.5px;width:10px;height:10px;border-radius:50%;background:radial-gradient(circle at 40% 35%,#5cc23f,#2f9a1c)"></div>
  <div class="t" style="left:19.2px;top:255.3px;font-size:8.8px;color:#333">All prerequisite actions have</div>
  <div class="t" style="left:19.2px;top:266.3px;font-size:8.8px;color:#333">been completed.</div>
  <div class="t" style="left:7.9px;top:285px;font-size:8.8px;color:#333">Run the simulation to generate results.</div>

  <div style="position:absolute;left:2.9px;top:301.3px;width:160px;height:52px;border:1px solid #95c3e6;background:linear-gradient(170deg,#dedede,#f3f3f3)"></div>
  <svg style="position:absolute;left:7px;top:304px" width="21" height="20"><path d="M3 9A7 6 0 0 1 16 5" stroke="#2f78a6" stroke-width="2.6" fill="none"/><path d="M13 1.5L19 5.5L13 8Z" fill="#2f78a6"/><path d="M18 11A7 6 0 0 1 5 15" stroke="#2f78a6" stroke-width="2.6" fill="none"/><path d="M8 18.5L2 14.5L8 12Z" fill="#2f78a6"/><path d="M7 5.5L15 10L7 14.5Z" fill="#222"/></svg>
  <div class="t b" style="left:34.2px;top:305px;font-size:8.8px;color:#222">Simulate</div>
  <div class="t" style="left:34.2px;top:317px;font-size:8.8px;color:#444">Specifies the parameters for</div>
  <div class="t" style="left:34.2px;top:328.3px;font-size:8.8px;color:#444">running the simulation and</div>
  <div class="t" style="left:34.2px;top:339.2px;font-size:8.8px;color:#444">then runs it.</div>

  <div style="position:absolute;left:6.7px;top:362.7px;width:19px;height:16px;border:1px solid #555;background:#f8f8f8"></div>
  <svg style="position:absolute;left:7px;top:363px" width="20" height="17"><g fill="#3b7fb0"><circle cx="10" cy="3.5" r="1"/><circle cx="6" cy="5" r="0.9"/><circle cx="4.5" cy="9" r="0.9"/><circle cx="6" cy="13" r="0.9"/><circle cx="10" cy="14.5" r="0.9"/><circle cx="14" cy="13" r="0.9"/><circle cx="15.5" cy="9" r="0.7"/></g></svg>
  <div class="t b" style="left:34.2px;top:360.6px;font-size:8.8px;color:#222">Simulation Status</div>
  <div class="t" style="left:34.2px;top:372.8px;font-size:8.8px;color:#444">Shows the solve status of</div>
  <div class="t" style="left:34.2px;top:384.2px;font-size:8.8px;color:#444">the simulation.</div>
</div>
<div class="redbox" style="left:844.4px;top:297.6px;width:178px;height:64.2px"></div>
<!-- Ribbon -->
<div id="rtabs">
  <div class="rt act" style="left:138.3px;width:43.9px">Standard<div style="position:absolute;left:0;top:0;width:0;height:0;border-top:6px solid #2f83c8;border-right:6px solid transparent"></div></div>
  <div class="rt" style="left:182.2px;width:32.8px">Setup</div>
  <div class="rt" style="left:215px;width:51.5px">Conditions</div>
  <div class="rt" style="left:266.5px;width:31.3px">Mesh</div>
  <div class="rt" style="left:297.8px;width:38.1px">Results</div>
  <div class="rt act2" style="left:335.9px;width:37.4px">Display</div>
  <div class="rt" style="left:373.3px;width:28.2px">View</div>
  <div class="rt" style="left:401.5px;width:36.1px">AR-VR</div>
  <div class="rt" style="left:437.6px;width:30.1px">Tools</div>
  <div class="rt" style="left:467.7px;width:32.8px">Touch</div>
</div>
<div id="rbody"><div style="position:absolute;left:0.9px;top:1px;width:600px;height:70px">
  <svg style="position:absolute;left:2.2px;top:5.1px" width="7" height="4"><path d="M0.5 0.5L3.5 3.2L6.5 0.5" stroke="#777" stroke-width="1" fill="none"/></svg>
  <div class="rsep" style="left:12.7px"></div>
  <div class="rsep" style="left:86.5px"></div>
  <div class="rsep" style="left:149.5px"></div>
  <div class="rsep" style="left:221.9px"></div>
  <div class="rsep" style="left:294.5px"></div>
  <!-- Undo -->
  <svg style="position:absolute;left:35px;top:5.6px" width="22" height="22"><defs><linearGradient id="ug" x1="0" y1="0" x2="0.5" y2="1"><stop offset="0" stop-color="#8ad0f2"/><stop offset="1" stop-color="#3a86b2"/></linearGradient></defs>
  <path d="M5.8 6.8A6.8 6.8 0 1 1 13.7 16.9" stroke="#245f86" stroke-width="4.6" fill="none"/>
  <path d="M0.6 2L0.6 10.5L9.4 10.5Z" fill="#72c0e8" stroke="#245f86" stroke-width="0.9" stroke-linejoin="round"/>
  <path d="M5.8 6.8A6.8 6.8 0 1 1 13.7 16.9" stroke="url(#ug)" stroke-width="3" fill="none"/>
  <path d="M1.1 3.2L1.1 10L8 10Z" fill="#72c0e8"/>
  </svg>
  <div class="rl" style="left:45.8px;top:30.5px">Undo</div>
  <svg class="rarr" style="left:77px"><path d="M0 0H5.5L2.75 3Z" fill="#8a8a8a"/></svg>
  <!-- Results Visualization -->
  <svg style="position:absolute;left:110.2px;top:5.6px" width="19" height="20"><defs><linearGradient id="rg" x1="0.1" y1="0" x2="0.8" y2="1"><stop offset="0" stop-color="#f2707a"/><stop offset="0.38" stop-color="#f3e070"/><stop offset="0.68" stop-color="#8ee27a"/><stop offset="1" stop-color="#6a8fe0"/></linearGradient></defs><path d="M1 4.5L6.5 1.8L11.5 3.8V9.2L17.3 12.2V16.8L11.8 19.3L1 13.8Z" fill="url(#rg)" stroke="#9a9a9a" stroke-width="0.8" stroke-linejoin="round"/><path d="M1 4.5L6.2 6.6L11.5 3.8M6.2 6.6V11.8L11.5 9.2M6.2 11.8L11.8 14.6L17.3 12.2M11.8 14.6V19.3" stroke="#a8a8a8" stroke-width="0.7" fill="none"/></svg>
  <div class="rl g" style="left:119px;top:29.5px">Results</div>
  <div class="rl g" style="left:119px;top:38.9px">Visualization</div>
  <!-- Feature Manager -->
  <div style="position:absolute;left:170.1px;top:5.7px;width:21.2px;height:19.6px;box-sizing:border-box;border:1px solid #7a7a7a;background:linear-gradient(#fff,#eee)"><div style="position:absolute;left:0;top:0;width:19.2px;height:3px;background:linear-gradient(#6aa6cf,#3d7eab)"></div>
    <svg style="position:absolute;left:0.5px;top:5px" width="18" height="12"><g fill="#2f6f9c"><rect x="0.6" y="0.4" width="2.6" height="1.6"/><rect x="4.5" y="0.4" width="2.8" height="1.6"/><rect x="8.2" y="0.4" width="8.4" height="1.6"/><rect x="0.6" y="3.4" width="2.6" height="1.6"/><rect x="4.5" y="3.4" width="2.8" height="1.6"/><rect x="8.2" y="3.4" width="8.4" height="1.6"/><rect x="0.6" y="6.4" width="2.6" height="1.6"/><rect x="4.5" y="6.4" width="2.8" height="1.6"/><rect x="8.2" y="6.4" width="8.4" height="1.6"/><rect x="0.6" y="9.4" width="2.6" height="1.6"/><rect x="4.5" y="9.4" width="2.8" height="1.6"/><rect x="8.2" y="9.4" width="8.4" height="1.6"/></g></svg></div>
  <div class="rl" style="left:181px;top:30.0px">Feature</div>
  <div class="rl" style="left:181px;top:41.0px">Manager</div>
  <svg class="rarr" style="left:212px"><path d="M0 0H5.5L2.75 3Z" fill="#8a8a8a"/></svg>
  <!-- Update -->
  <svg style="position:absolute;left:243.1px;top:5.5px" width="21" height="21"><defs><linearGradient id="udg" x1="0" y1="0" x2="1" y2="1"><stop offset="0" stop-color="#86cdf0"/><stop offset="1" stop-color="#2b6e98"/></linearGradient></defs>
  <circle cx="9.6" cy="10" r="7" fill="none" stroke="#215a80" stroke-width="5.4"/>
  <circle cx="9.6" cy="10" r="7" fill="none" stroke="url(#udg)" stroke-width="3.8"/>
  <path d="M9.6 0V21M0 10H21" stroke="#f0f0f0" stroke-width="1.3"/>
  <path d="M0.3 7.2L3.5 4.8L3.2 9Z" fill="#215a80"/><path d="M15 1L18.3 2.5L16.5 5Z" fill="#215a80"/><path d="M19 12.8L18.6 17.5L15.8 15Z" fill="#215a80"/><path d="M3.5 19L5.5 15.2L7.5 18.8Z" fill="#215a80"/>
  </svg>
  <div class="rl" style="left:253.1px;top:30.3px">Update</div>
  <svg class="rarr" style="left:284.2px"><path d="M0 0H5.5L2.75 3Z" fill="#8a8a8a"/></svg>
  <!-- Visibility Manager -->
  <div style="position:absolute;left:318.5px;top:6px;width:19.6px;height:18.5px;border:1px solid #8a8a8a;background:#fafafa"><div style="position:absolute;left:0;top:0;width:19.6px;height:2.6px;background:#3978a6"></div>
    <svg style="position:absolute;left:2px;top:5px" width="16" height="11"><path d="M1 5.5Q8 -0.5 15 5.5Q8 11.5 1 5.5Z" fill="#d8d8d8" stroke="#444" stroke-width="0.9"/><circle cx="8" cy="5.5" r="2.7" fill="#222"/></svg></div>
  <div class="rl" style="left:328.8px;top:29.2px">Visibility</div>
  <div class="rl" style="left:328.8px;top:39.0px">Manager</div>
  <!-- Clipping Box -->
  <svg style="position:absolute;left:376.6px;top:4px" width="23" height="23"><path d="M2.5 4A4.5 2 0 0 1 11.5 4V13.5A4.5 2 0 0 1 2.5 13.5Z" fill="#fafafa" stroke="#7a7a7a" stroke-width="0.9"/><path d="M2.5 4A4.5 2 0 0 0 11.5 4" fill="none" stroke="#9a9a9a" stroke-width="0.7"/><path d="M5.9 6.9H11.5V13.5A4.5 2 0 0 1 5.9 15.3Z" fill="#2f6fa0"/><rect x="5.7" y="6.7" width="11.8" height="9.3" fill="none" stroke="#333" stroke-width="0.8" stroke-dasharray="1.5 1"/><path d="M15.3 14.2V21.3L17 19.7L18.4 22.3L19.5 21.7L18.2 19.2L20.6 19Z" fill="#fff" stroke="#333" stroke-width="0.75" stroke-linejoin="round"/></svg>
  <div class="rl" style="left:387.3px;top:29.2px">Clipping</div>
  <div class="rl" style="left:387.3px;top:39.0px">Box</div>
  <!-- Sectioning -->
  <svg style="position:absolute;left:434.6px;top:4px" width="24" height="23"><path d="M2 8Q4 1.5 12.5 1.5Q21.5 1.5 21.8 6.5V16.5Q21.5 19.3 16.5 19.3L8 21.5H2Z" fill="#e4e4e4" stroke="#5a5a5a" stroke-width="0.9"/><path d="M13.5 3V18.6M17.5 3V18.8M8.5 8.5H21.5M8.5 12.5H21.5M8.5 16.3H21.5" stroke="#a0a0a0" stroke-width="0.7"/><path d="M9 5.5Q13 3 21.8 6.5" fill="none" stroke="#8a8a8a" stroke-width="0.6"/><path d="M1.6 8.3L8.4 5.6V19.9L1.6 21.8Z" fill="#2a6c9a" stroke="#1d4a6a" stroke-width="0.8"/><path d="M2.2 12L7.8 8.5M2.2 15.5L7.8 12M2.2 19L7.8 15.5" stroke="#8cc4ea" stroke-width="0.8"/></svg>
  <div class="rl" style="left:446px;top:29.2px">Sectioning</div>
  <!-- Display Preferences -->
  <div style="position:absolute;left:495.6px;top:7.5px;width:18.3px;height:15.7px;box-sizing:border-box;border:1px solid #7a7a7a;background:linear-gradient(#fff,#ededed)"><div style="position:absolute;left:0;top:0;width:16.3px;height:2.8px;background:linear-gradient(#6aa6cf,#3d7eab)"></div>
    <svg style="position:absolute;left:1px;top:4.3px" width="15" height="10"><g fill="#2f6f9c"><circle cx="2.5" cy="2" r="1.3"/><circle cx="2.5" cy="7" r="1.3"/></g><g fill="#777"><rect x="5" y="1.5" width="8.5" height="0.9"/><rect x="5" y="6.5" width="8.5" height="0.9"/></g><g fill="#c8c8c8"><rect x="5" y="3.3" width="8.5" height="0.6"/><rect x="5" y="8.3" width="8.5" height="0.6"/></g></svg></div>
  <div class="rl" style="left:505px;top:29.2px">Display</div>
  <div class="rl" style="left:505px;top:39.0px">Preferences</div>
</div></div>
</body></html>
